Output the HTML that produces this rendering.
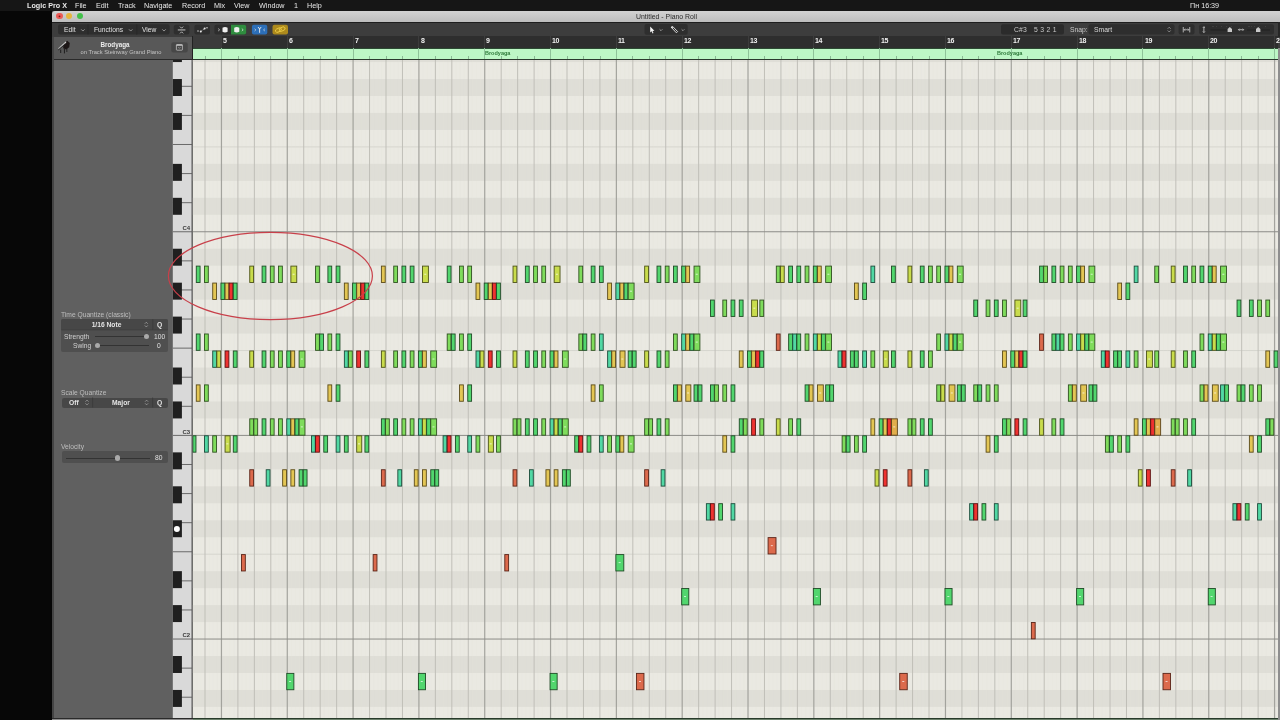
<!DOCTYPE html>
<html><head><meta charset="utf-8"><style>
html,body{margin:0;padding:0;width:1280px;height:720px;overflow:hidden;background:#070707;font-family:'Liberation Sans', sans-serif;-webkit-font-smoothing:antialiased;}
.mt,.it,svg text{will-change:transform}
.a{position:absolute}
.mt{position:absolute;top:0;height:11px;line-height:11px;font-size:7.2px;color:#e8e8e8;white-space:nowrap}
.it{position:absolute;font-size:6.7px;color:#bdbdbd;white-space:nowrap;line-height:8px}
svg{position:absolute;left:0;top:0}
</style></head><body>
<div class="a" style="left:0;top:0;width:1280px;height:10.6px;background:#161616"></div>
<div class="a" style="left:52px;top:11px;width:1228px;height:709px;background:#3c3c3c"></div>
<div class="a" style="left:52px;top:11px;width:1228px;height:11px;background:linear-gradient(#d2d2d2,#bdbdbd);border-radius:3px 0 0 0"></div>
<div class="a" style="left:52px;top:21.6px;width:1227px;height:1px;background:#1e1e1e"></div>
<div class="a" style="left:52px;top:22.5px;width:1226.4px;height:14px;background:#3d3d3d"></div><div class="a" style="left:1278.4px;top:22px;width:1.6px;height:14.5px;background:#262626"></div>
<div class="a" style="left:52px;top:36.5px;width:120.5px;height:683.5px;background:#606060"></div>
<div class="a" style="left:52px;top:36.5px;width:140.5px;height:22.5px;background:#585858"></div>
<div class="a" style="left:52px;top:59px;width:140.5px;height:1px;background:#2a2a2a"></div>
<div class="a" style="left:52px;top:36.5px;width:1.5px;height:683.5px;background:#444"></div>
<div class="a" style="left:192.5px;top:36px;width:1085.5px;height:12.3px;background:#2e2e2e"></div>
<div class="a" style="left:192.5px;top:36px;width:28.9px;height:12.3px;background:#3b3b3b"></div>
<div style="position:absolute;left:220.95px;top:36px;width:1px;height:12.3px;background:#3c3c3c"></div><div style="position:absolute;left:223.05px;top:36.2px;font:bold 7px 'Liberation Sans', sans-serif;letter-spacing:-0.5px;color:#f0f0f0;line-height:9px;will-change:transform">5</div><div style="position:absolute;left:286.77px;top:36px;width:1px;height:12.3px;background:#3c3c3c"></div><div style="position:absolute;left:288.87px;top:36.2px;font:bold 7px 'Liberation Sans', sans-serif;letter-spacing:-0.5px;color:#f0f0f0;line-height:9px;will-change:transform">6</div><div style="position:absolute;left:352.59px;top:36px;width:1px;height:12.3px;background:#3c3c3c"></div><div style="position:absolute;left:354.69px;top:36.2px;font:bold 7px 'Liberation Sans', sans-serif;letter-spacing:-0.5px;color:#f0f0f0;line-height:9px;will-change:transform">7</div><div style="position:absolute;left:418.41px;top:36px;width:1px;height:12.3px;background:#3c3c3c"></div><div style="position:absolute;left:420.51px;top:36.2px;font:bold 7px 'Liberation Sans', sans-serif;letter-spacing:-0.5px;color:#f0f0f0;line-height:9px;will-change:transform">8</div><div style="position:absolute;left:484.23px;top:36px;width:1px;height:12.3px;background:#3c3c3c"></div><div style="position:absolute;left:486.33px;top:36.2px;font:bold 7px 'Liberation Sans', sans-serif;letter-spacing:-0.5px;color:#f0f0f0;line-height:9px;will-change:transform">9</div><div style="position:absolute;left:550.05px;top:36px;width:1px;height:12.3px;background:#3c3c3c"></div><div style="position:absolute;left:552.15px;top:36.2px;font:bold 7px 'Liberation Sans', sans-serif;letter-spacing:-0.5px;color:#f0f0f0;line-height:9px;will-change:transform">10</div><div style="position:absolute;left:615.87px;top:36px;width:1px;height:12.3px;background:#3c3c3c"></div><div style="position:absolute;left:617.97px;top:36.2px;font:bold 7px 'Liberation Sans', sans-serif;letter-spacing:-0.5px;color:#f0f0f0;line-height:9px;will-change:transform">11</div><div style="position:absolute;left:681.69px;top:36px;width:1px;height:12.3px;background:#3c3c3c"></div><div style="position:absolute;left:683.79px;top:36.2px;font:bold 7px 'Liberation Sans', sans-serif;letter-spacing:-0.5px;color:#f0f0f0;line-height:9px;will-change:transform">12</div><div style="position:absolute;left:747.51px;top:36px;width:1px;height:12.3px;background:#3c3c3c"></div><div style="position:absolute;left:749.61px;top:36.2px;font:bold 7px 'Liberation Sans', sans-serif;letter-spacing:-0.5px;color:#f0f0f0;line-height:9px;will-change:transform">13</div><div style="position:absolute;left:813.33px;top:36px;width:1px;height:12.3px;background:#3c3c3c"></div><div style="position:absolute;left:815.43px;top:36.2px;font:bold 7px 'Liberation Sans', sans-serif;letter-spacing:-0.5px;color:#f0f0f0;line-height:9px;will-change:transform">14</div><div style="position:absolute;left:879.15px;top:36px;width:1px;height:12.3px;background:#3c3c3c"></div><div style="position:absolute;left:881.25px;top:36.2px;font:bold 7px 'Liberation Sans', sans-serif;letter-spacing:-0.5px;color:#f0f0f0;line-height:9px;will-change:transform">15</div><div style="position:absolute;left:944.97px;top:36px;width:1px;height:12.3px;background:#3c3c3c"></div><div style="position:absolute;left:947.07px;top:36.2px;font:bold 7px 'Liberation Sans', sans-serif;letter-spacing:-0.5px;color:#f0f0f0;line-height:9px;will-change:transform">16</div><div style="position:absolute;left:1010.79px;top:36px;width:1px;height:12.3px;background:#3c3c3c"></div><div style="position:absolute;left:1012.89px;top:36.2px;font:bold 7px 'Liberation Sans', sans-serif;letter-spacing:-0.5px;color:#f0f0f0;line-height:9px;will-change:transform">17</div><div style="position:absolute;left:1076.61px;top:36px;width:1px;height:12.3px;background:#3c3c3c"></div><div style="position:absolute;left:1078.71px;top:36.2px;font:bold 7px 'Liberation Sans', sans-serif;letter-spacing:-0.5px;color:#f0f0f0;line-height:9px;will-change:transform">18</div><div style="position:absolute;left:1142.43px;top:36px;width:1px;height:12.3px;background:#3c3c3c"></div><div style="position:absolute;left:1144.53px;top:36.2px;font:bold 7px 'Liberation Sans', sans-serif;letter-spacing:-0.5px;color:#f0f0f0;line-height:9px;will-change:transform">19</div><div style="position:absolute;left:1208.25px;top:36px;width:1px;height:12.3px;background:#3c3c3c"></div><div style="position:absolute;left:1210.35px;top:36.2px;font:bold 7px 'Liberation Sans', sans-serif;letter-spacing:-0.5px;color:#f0f0f0;line-height:9px;will-change:transform">20</div><div style="position:absolute;left:1274.07px;top:36px;width:1px;height:12.3px;background:#3c3c3c"></div><div style="position:absolute;left:1276.17px;top:36.2px;font:bold 7px 'Liberation Sans', sans-serif;letter-spacing:-0.5px;color:#f0f0f0;line-height:9px;will-change:transform">21</div>
<div class="a" style="left:192.5px;top:48.3px;width:1085.5px;height:10.8px;background:#bdf7c6"></div>
<div class="a" style="left:192.5px;top:48.1px;width:1085.5px;height:0.6px;background:#2c4a32"></div>
<div style="position:absolute;left:204.59px;top:56px;width:0.8px;height:3px;background:#8ab894"></div><div style="position:absolute;left:220.95px;top:48px;width:1px;height:11px;background:#8fc39a"></div><div style="position:absolute;left:237.50px;top:56px;width:0.8px;height:3px;background:#8ab894"></div><div style="position:absolute;left:253.96px;top:56px;width:0.8px;height:3px;background:#8ab894"></div><div style="position:absolute;left:270.42px;top:56px;width:0.8px;height:3px;background:#8ab894"></div><div style="position:absolute;left:286.77px;top:48px;width:1px;height:11px;background:#8fc39a"></div><div style="position:absolute;left:303.32px;top:56px;width:0.8px;height:3px;background:#8ab894"></div><div style="position:absolute;left:319.78px;top:56px;width:0.8px;height:3px;background:#8ab894"></div><div style="position:absolute;left:336.24px;top:56px;width:0.8px;height:3px;background:#8ab894"></div><div style="position:absolute;left:352.59px;top:48px;width:1px;height:11px;background:#8fc39a"></div><div style="position:absolute;left:369.14px;top:56px;width:0.8px;height:3px;background:#8ab894"></div><div style="position:absolute;left:385.60px;top:56px;width:0.8px;height:3px;background:#8ab894"></div><div style="position:absolute;left:402.06px;top:56px;width:0.8px;height:3px;background:#8ab894"></div><div style="position:absolute;left:418.41px;top:48px;width:1px;height:11px;background:#8fc39a"></div><div style="position:absolute;left:434.96px;top:56px;width:0.8px;height:3px;background:#8ab894"></div><div style="position:absolute;left:451.42px;top:56px;width:0.8px;height:3px;background:#8ab894"></div><div style="position:absolute;left:467.88px;top:56px;width:0.8px;height:3px;background:#8ab894"></div><div style="position:absolute;left:484.23px;top:48px;width:1px;height:11px;background:#8fc39a"></div><div style="position:absolute;left:500.78px;top:56px;width:0.8px;height:3px;background:#8ab894"></div><div style="position:absolute;left:517.24px;top:56px;width:0.8px;height:3px;background:#8ab894"></div><div style="position:absolute;left:533.70px;top:56px;width:0.8px;height:3px;background:#8ab894"></div><div style="position:absolute;left:550.05px;top:48px;width:1px;height:11px;background:#8fc39a"></div><div style="position:absolute;left:566.60px;top:56px;width:0.8px;height:3px;background:#8ab894"></div><div style="position:absolute;left:583.06px;top:56px;width:0.8px;height:3px;background:#8ab894"></div><div style="position:absolute;left:599.51px;top:56px;width:0.8px;height:3px;background:#8ab894"></div><div style="position:absolute;left:615.87px;top:48px;width:1px;height:11px;background:#8fc39a"></div><div style="position:absolute;left:632.42px;top:56px;width:0.8px;height:3px;background:#8ab894"></div><div style="position:absolute;left:648.88px;top:56px;width:0.8px;height:3px;background:#8ab894"></div><div style="position:absolute;left:665.33px;top:56px;width:0.8px;height:3px;background:#8ab894"></div><div style="position:absolute;left:681.69px;top:48px;width:1px;height:11px;background:#8fc39a"></div><div style="position:absolute;left:698.25px;top:56px;width:0.8px;height:3px;background:#8ab894"></div><div style="position:absolute;left:714.70px;top:56px;width:0.8px;height:3px;background:#8ab894"></div><div style="position:absolute;left:731.15px;top:56px;width:0.8px;height:3px;background:#8ab894"></div><div style="position:absolute;left:747.51px;top:48px;width:1px;height:11px;background:#8fc39a"></div><div style="position:absolute;left:764.06px;top:56px;width:0.8px;height:3px;background:#8ab894"></div><div style="position:absolute;left:780.52px;top:56px;width:0.8px;height:3px;background:#8ab894"></div><div style="position:absolute;left:796.98px;top:56px;width:0.8px;height:3px;background:#8ab894"></div><div style="position:absolute;left:813.33px;top:48px;width:1px;height:11px;background:#8fc39a"></div><div style="position:absolute;left:829.88px;top:56px;width:0.8px;height:3px;background:#8ab894"></div><div style="position:absolute;left:846.34px;top:56px;width:0.8px;height:3px;background:#8ab894"></div><div style="position:absolute;left:862.79px;top:56px;width:0.8px;height:3px;background:#8ab894"></div><div style="position:absolute;left:879.15px;top:48px;width:1px;height:11px;background:#8fc39a"></div><div style="position:absolute;left:895.71px;top:56px;width:0.8px;height:3px;background:#8ab894"></div><div style="position:absolute;left:912.16px;top:56px;width:0.8px;height:3px;background:#8ab894"></div><div style="position:absolute;left:928.61px;top:56px;width:0.8px;height:3px;background:#8ab894"></div><div style="position:absolute;left:944.97px;top:48px;width:1px;height:11px;background:#8fc39a"></div><div style="position:absolute;left:961.52px;top:56px;width:0.8px;height:3px;background:#8ab894"></div><div style="position:absolute;left:977.98px;top:56px;width:0.8px;height:3px;background:#8ab894"></div><div style="position:absolute;left:994.43px;top:56px;width:0.8px;height:3px;background:#8ab894"></div><div style="position:absolute;left:1010.79px;top:48px;width:1px;height:11px;background:#8fc39a"></div><div style="position:absolute;left:1027.34px;top:56px;width:0.8px;height:3px;background:#8ab894"></div><div style="position:absolute;left:1043.80px;top:56px;width:0.8px;height:3px;background:#8ab894"></div><div style="position:absolute;left:1060.25px;top:56px;width:0.8px;height:3px;background:#8ab894"></div><div style="position:absolute;left:1076.61px;top:48px;width:1px;height:11px;background:#8fc39a"></div><div style="position:absolute;left:1093.16px;top:56px;width:0.8px;height:3px;background:#8ab894"></div><div style="position:absolute;left:1109.62px;top:56px;width:0.8px;height:3px;background:#8ab894"></div><div style="position:absolute;left:1126.07px;top:56px;width:0.8px;height:3px;background:#8ab894"></div><div style="position:absolute;left:1142.43px;top:48px;width:1px;height:11px;background:#8fc39a"></div><div style="position:absolute;left:1158.98px;top:56px;width:0.8px;height:3px;background:#8ab894"></div><div style="position:absolute;left:1175.44px;top:56px;width:0.8px;height:3px;background:#8ab894"></div><div style="position:absolute;left:1191.89px;top:56px;width:0.8px;height:3px;background:#8ab894"></div><div style="position:absolute;left:1208.25px;top:48px;width:1px;height:11px;background:#8fc39a"></div><div style="position:absolute;left:1224.80px;top:56px;width:0.8px;height:3px;background:#8ab894"></div><div style="position:absolute;left:1241.26px;top:56px;width:0.8px;height:3px;background:#8ab894"></div><div style="position:absolute;left:1257.71px;top:56px;width:0.8px;height:3px;background:#8ab894"></div><div style="position:absolute;left:1274.07px;top:48px;width:1px;height:11px;background:#8fc39a"></div>
<div class="a" style="left:192.5px;top:59.1px;width:1085.5px;height:0.9px;background:#2b3a2e"></div>
<div class="a" style="left:192px;top:36px;width:0.8px;height:23px;background:#222"></div>
<div class="a" style="left:56.4px;top:13.2px;width:6.2px;height:6.2px;border-radius:50%;background:#ec5a55"></div>
<div class="a" style="left:66.3px;top:13.2px;width:6.2px;height:6.2px;border-radius:50%;background:#e6b63c"></div>
<div class="a" style="left:76.6px;top:13.2px;width:6.2px;height:6.2px;border-radius:50%;background:#42c04a"></div>
<svg width="1280" height="720"><rect x="192.5" y="60.0" width="1085.5" height="658.0" fill="#eae9e2"/><rect x="192.5" y="689.95" width="1085.5" height="16.97" fill="#dfded7"/><rect x="192.5" y="656.01" width="1085.5" height="16.97" fill="#dfded7"/><rect x="192.5" y="605.10" width="1085.5" height="16.97" fill="#dfded7"/><rect x="192.5" y="571.16" width="1085.5" height="16.97" fill="#dfded7"/><rect x="192.5" y="520.25" width="1085.5" height="16.97" fill="#dfded7"/><rect x="192.5" y="486.31" width="1085.5" height="16.97" fill="#dfded7"/><rect x="192.5" y="452.37" width="1085.5" height="16.97" fill="#dfded7"/><rect x="192.5" y="401.46" width="1085.5" height="16.97" fill="#dfded7"/><rect x="192.5" y="367.52" width="1085.5" height="16.97" fill="#dfded7"/><rect x="192.5" y="316.61" width="1085.5" height="16.97" fill="#dfded7"/><rect x="192.5" y="282.67" width="1085.5" height="16.97" fill="#dfded7"/><rect x="192.5" y="248.73" width="1085.5" height="16.97" fill="#dfded7"/><rect x="192.5" y="197.82" width="1085.5" height="16.97" fill="#dfded7"/><rect x="192.5" y="163.88" width="1085.5" height="16.97" fill="#dfded7"/><rect x="192.5" y="112.97" width="1085.5" height="16.97" fill="#dfded7"/><rect x="192.5" y="79.03" width="1085.5" height="16.97" fill="#dfded7"/><rect x="192.5" y="60.00" width="1085.5" height="2.06" fill="#dfded7"/><rect x="192.5" y="553.69" width="1085.5" height="1" fill="#d6d5ce"/><rect x="192.5" y="350.05" width="1085.5" height="1" fill="#d6d5ce"/><rect x="192.5" y="146.41" width="1085.5" height="1" fill="#d6d5ce"/><rect x="192.15" y="60.0" width="1" height="658.0" fill="#e2e1da" opacity="0.15"/><rect x="196.27" y="60.0" width="1" height="658.0" fill="#e2e1da" opacity="0.15"/><rect x="200.38" y="60.0" width="1" height="658.0" fill="#e2e1da" opacity="0.15"/><rect x="208.61" y="60.0" width="1" height="658.0" fill="#e2e1da" opacity="0.15"/><rect x="212.72" y="60.0" width="1" height="658.0" fill="#e2e1da" opacity="0.15"/><rect x="216.84" y="60.0" width="1" height="658.0" fill="#e2e1da" opacity="0.15"/><rect x="225.06" y="60.0" width="1" height="658.0" fill="#e2e1da" opacity="0.15"/><rect x="229.18" y="60.0" width="1" height="658.0" fill="#e2e1da" opacity="0.15"/><rect x="233.29" y="60.0" width="1" height="658.0" fill="#e2e1da" opacity="0.15"/><rect x="241.52" y="60.0" width="1" height="658.0" fill="#e2e1da" opacity="0.15"/><rect x="245.63" y="60.0" width="1" height="658.0" fill="#e2e1da" opacity="0.15"/><rect x="249.75" y="60.0" width="1" height="658.0" fill="#e2e1da" opacity="0.15"/><rect x="257.97" y="60.0" width="1" height="658.0" fill="#e2e1da" opacity="0.15"/><rect x="262.09" y="60.0" width="1" height="658.0" fill="#e2e1da" opacity="0.15"/><rect x="266.20" y="60.0" width="1" height="658.0" fill="#e2e1da" opacity="0.15"/><rect x="274.43" y="60.0" width="1" height="658.0" fill="#e2e1da" opacity="0.15"/><rect x="278.54" y="60.0" width="1" height="658.0" fill="#e2e1da" opacity="0.15"/><rect x="282.66" y="60.0" width="1" height="658.0" fill="#e2e1da" opacity="0.15"/><rect x="290.88" y="60.0" width="1" height="658.0" fill="#e2e1da" opacity="0.15"/><rect x="295.00" y="60.0" width="1" height="658.0" fill="#e2e1da" opacity="0.15"/><rect x="299.11" y="60.0" width="1" height="658.0" fill="#e2e1da" opacity="0.15"/><rect x="307.34" y="60.0" width="1" height="658.0" fill="#e2e1da" opacity="0.15"/><rect x="311.45" y="60.0" width="1" height="658.0" fill="#e2e1da" opacity="0.15"/><rect x="315.57" y="60.0" width="1" height="658.0" fill="#e2e1da" opacity="0.15"/><rect x="323.79" y="60.0" width="1" height="658.0" fill="#e2e1da" opacity="0.15"/><rect x="327.91" y="60.0" width="1" height="658.0" fill="#e2e1da" opacity="0.15"/><rect x="332.02" y="60.0" width="1" height="658.0" fill="#e2e1da" opacity="0.15"/><rect x="340.25" y="60.0" width="1" height="658.0" fill="#e2e1da" opacity="0.15"/><rect x="344.36" y="60.0" width="1" height="658.0" fill="#e2e1da" opacity="0.15"/><rect x="348.48" y="60.0" width="1" height="658.0" fill="#e2e1da" opacity="0.15"/><rect x="356.70" y="60.0" width="1" height="658.0" fill="#e2e1da" opacity="0.15"/><rect x="360.82" y="60.0" width="1" height="658.0" fill="#e2e1da" opacity="0.15"/><rect x="364.93" y="60.0" width="1" height="658.0" fill="#e2e1da" opacity="0.15"/><rect x="373.16" y="60.0" width="1" height="658.0" fill="#e2e1da" opacity="0.15"/><rect x="377.27" y="60.0" width="1" height="658.0" fill="#e2e1da" opacity="0.15"/><rect x="381.39" y="60.0" width="1" height="658.0" fill="#e2e1da" opacity="0.15"/><rect x="389.61" y="60.0" width="1" height="658.0" fill="#e2e1da" opacity="0.15"/><rect x="393.73" y="60.0" width="1" height="658.0" fill="#e2e1da" opacity="0.15"/><rect x="397.84" y="60.0" width="1" height="658.0" fill="#e2e1da" opacity="0.15"/><rect x="406.07" y="60.0" width="1" height="658.0" fill="#e2e1da" opacity="0.15"/><rect x="410.18" y="60.0" width="1" height="658.0" fill="#e2e1da" opacity="0.15"/><rect x="414.30" y="60.0" width="1" height="658.0" fill="#e2e1da" opacity="0.15"/><rect x="422.52" y="60.0" width="1" height="658.0" fill="#e2e1da" opacity="0.15"/><rect x="426.64" y="60.0" width="1" height="658.0" fill="#e2e1da" opacity="0.15"/><rect x="430.75" y="60.0" width="1" height="658.0" fill="#e2e1da" opacity="0.15"/><rect x="438.98" y="60.0" width="1" height="658.0" fill="#e2e1da" opacity="0.15"/><rect x="443.09" y="60.0" width="1" height="658.0" fill="#e2e1da" opacity="0.15"/><rect x="447.21" y="60.0" width="1" height="658.0" fill="#e2e1da" opacity="0.15"/><rect x="455.43" y="60.0" width="1" height="658.0" fill="#e2e1da" opacity="0.15"/><rect x="459.55" y="60.0" width="1" height="658.0" fill="#e2e1da" opacity="0.15"/><rect x="463.66" y="60.0" width="1" height="658.0" fill="#e2e1da" opacity="0.15"/><rect x="471.89" y="60.0" width="1" height="658.0" fill="#e2e1da" opacity="0.15"/><rect x="476.00" y="60.0" width="1" height="658.0" fill="#e2e1da" opacity="0.15"/><rect x="480.12" y="60.0" width="1" height="658.0" fill="#e2e1da" opacity="0.15"/><rect x="488.34" y="60.0" width="1" height="658.0" fill="#e2e1da" opacity="0.15"/><rect x="492.46" y="60.0" width="1" height="658.0" fill="#e2e1da" opacity="0.15"/><rect x="496.57" y="60.0" width="1" height="658.0" fill="#e2e1da" opacity="0.15"/><rect x="504.80" y="60.0" width="1" height="658.0" fill="#e2e1da" opacity="0.15"/><rect x="508.91" y="60.0" width="1" height="658.0" fill="#e2e1da" opacity="0.15"/><rect x="513.03" y="60.0" width="1" height="658.0" fill="#e2e1da" opacity="0.15"/><rect x="521.25" y="60.0" width="1" height="658.0" fill="#e2e1da" opacity="0.15"/><rect x="525.37" y="60.0" width="1" height="658.0" fill="#e2e1da" opacity="0.15"/><rect x="529.48" y="60.0" width="1" height="658.0" fill="#e2e1da" opacity="0.15"/><rect x="537.71" y="60.0" width="1" height="658.0" fill="#e2e1da" opacity="0.15"/><rect x="541.82" y="60.0" width="1" height="658.0" fill="#e2e1da" opacity="0.15"/><rect x="545.94" y="60.0" width="1" height="658.0" fill="#e2e1da" opacity="0.15"/><rect x="554.16" y="60.0" width="1" height="658.0" fill="#e2e1da" opacity="0.15"/><rect x="558.28" y="60.0" width="1" height="658.0" fill="#e2e1da" opacity="0.15"/><rect x="562.39" y="60.0" width="1" height="658.0" fill="#e2e1da" opacity="0.15"/><rect x="570.62" y="60.0" width="1" height="658.0" fill="#e2e1da" opacity="0.15"/><rect x="574.73" y="60.0" width="1" height="658.0" fill="#e2e1da" opacity="0.15"/><rect x="578.85" y="60.0" width="1" height="658.0" fill="#e2e1da" opacity="0.15"/><rect x="587.07" y="60.0" width="1" height="658.0" fill="#e2e1da" opacity="0.15"/><rect x="591.19" y="60.0" width="1" height="658.0" fill="#e2e1da" opacity="0.15"/><rect x="595.30" y="60.0" width="1" height="658.0" fill="#e2e1da" opacity="0.15"/><rect x="603.53" y="60.0" width="1" height="658.0" fill="#e2e1da" opacity="0.15"/><rect x="607.64" y="60.0" width="1" height="658.0" fill="#e2e1da" opacity="0.15"/><rect x="611.76" y="60.0" width="1" height="658.0" fill="#e2e1da" opacity="0.15"/><rect x="619.98" y="60.0" width="1" height="658.0" fill="#e2e1da" opacity="0.15"/><rect x="624.10" y="60.0" width="1" height="658.0" fill="#e2e1da" opacity="0.15"/><rect x="628.21" y="60.0" width="1" height="658.0" fill="#e2e1da" opacity="0.15"/><rect x="636.44" y="60.0" width="1" height="658.0" fill="#e2e1da" opacity="0.15"/><rect x="640.55" y="60.0" width="1" height="658.0" fill="#e2e1da" opacity="0.15"/><rect x="644.67" y="60.0" width="1" height="658.0" fill="#e2e1da" opacity="0.15"/><rect x="652.89" y="60.0" width="1" height="658.0" fill="#e2e1da" opacity="0.15"/><rect x="657.01" y="60.0" width="1" height="658.0" fill="#e2e1da" opacity="0.15"/><rect x="661.12" y="60.0" width="1" height="658.0" fill="#e2e1da" opacity="0.15"/><rect x="669.35" y="60.0" width="1" height="658.0" fill="#e2e1da" opacity="0.15"/><rect x="673.46" y="60.0" width="1" height="658.0" fill="#e2e1da" opacity="0.15"/><rect x="677.58" y="60.0" width="1" height="658.0" fill="#e2e1da" opacity="0.15"/><rect x="685.80" y="60.0" width="1" height="658.0" fill="#e2e1da" opacity="0.15"/><rect x="689.92" y="60.0" width="1" height="658.0" fill="#e2e1da" opacity="0.15"/><rect x="694.03" y="60.0" width="1" height="658.0" fill="#e2e1da" opacity="0.15"/><rect x="702.26" y="60.0" width="1" height="658.0" fill="#e2e1da" opacity="0.15"/><rect x="706.37" y="60.0" width="1" height="658.0" fill="#e2e1da" opacity="0.15"/><rect x="710.49" y="60.0" width="1" height="658.0" fill="#e2e1da" opacity="0.15"/><rect x="718.71" y="60.0" width="1" height="658.0" fill="#e2e1da" opacity="0.15"/><rect x="722.83" y="60.0" width="1" height="658.0" fill="#e2e1da" opacity="0.15"/><rect x="726.94" y="60.0" width="1" height="658.0" fill="#e2e1da" opacity="0.15"/><rect x="735.17" y="60.0" width="1" height="658.0" fill="#e2e1da" opacity="0.15"/><rect x="739.28" y="60.0" width="1" height="658.0" fill="#e2e1da" opacity="0.15"/><rect x="743.40" y="60.0" width="1" height="658.0" fill="#e2e1da" opacity="0.15"/><rect x="751.62" y="60.0" width="1" height="658.0" fill="#e2e1da" opacity="0.15"/><rect x="755.74" y="60.0" width="1" height="658.0" fill="#e2e1da" opacity="0.15"/><rect x="759.85" y="60.0" width="1" height="658.0" fill="#e2e1da" opacity="0.15"/><rect x="768.08" y="60.0" width="1" height="658.0" fill="#e2e1da" opacity="0.15"/><rect x="772.19" y="60.0" width="1" height="658.0" fill="#e2e1da" opacity="0.15"/><rect x="776.31" y="60.0" width="1" height="658.0" fill="#e2e1da" opacity="0.15"/><rect x="784.53" y="60.0" width="1" height="658.0" fill="#e2e1da" opacity="0.15"/><rect x="788.65" y="60.0" width="1" height="658.0" fill="#e2e1da" opacity="0.15"/><rect x="792.76" y="60.0" width="1" height="658.0" fill="#e2e1da" opacity="0.15"/><rect x="800.99" y="60.0" width="1" height="658.0" fill="#e2e1da" opacity="0.15"/><rect x="805.10" y="60.0" width="1" height="658.0" fill="#e2e1da" opacity="0.15"/><rect x="809.22" y="60.0" width="1" height="658.0" fill="#e2e1da" opacity="0.15"/><rect x="817.44" y="60.0" width="1" height="658.0" fill="#e2e1da" opacity="0.15"/><rect x="821.56" y="60.0" width="1" height="658.0" fill="#e2e1da" opacity="0.15"/><rect x="825.67" y="60.0" width="1" height="658.0" fill="#e2e1da" opacity="0.15"/><rect x="833.90" y="60.0" width="1" height="658.0" fill="#e2e1da" opacity="0.15"/><rect x="838.01" y="60.0" width="1" height="658.0" fill="#e2e1da" opacity="0.15"/><rect x="842.13" y="60.0" width="1" height="658.0" fill="#e2e1da" opacity="0.15"/><rect x="850.35" y="60.0" width="1" height="658.0" fill="#e2e1da" opacity="0.15"/><rect x="854.47" y="60.0" width="1" height="658.0" fill="#e2e1da" opacity="0.15"/><rect x="858.58" y="60.0" width="1" height="658.0" fill="#e2e1da" opacity="0.15"/><rect x="866.81" y="60.0" width="1" height="658.0" fill="#e2e1da" opacity="0.15"/><rect x="870.92" y="60.0" width="1" height="658.0" fill="#e2e1da" opacity="0.15"/><rect x="875.04" y="60.0" width="1" height="658.0" fill="#e2e1da" opacity="0.15"/><rect x="883.26" y="60.0" width="1" height="658.0" fill="#e2e1da" opacity="0.15"/><rect x="887.38" y="60.0" width="1" height="658.0" fill="#e2e1da" opacity="0.15"/><rect x="891.49" y="60.0" width="1" height="658.0" fill="#e2e1da" opacity="0.15"/><rect x="899.72" y="60.0" width="1" height="658.0" fill="#e2e1da" opacity="0.15"/><rect x="903.83" y="60.0" width="1" height="658.0" fill="#e2e1da" opacity="0.15"/><rect x="907.95" y="60.0" width="1" height="658.0" fill="#e2e1da" opacity="0.15"/><rect x="916.17" y="60.0" width="1" height="658.0" fill="#e2e1da" opacity="0.15"/><rect x="920.29" y="60.0" width="1" height="658.0" fill="#e2e1da" opacity="0.15"/><rect x="924.40" y="60.0" width="1" height="658.0" fill="#e2e1da" opacity="0.15"/><rect x="932.63" y="60.0" width="1" height="658.0" fill="#e2e1da" opacity="0.15"/><rect x="936.74" y="60.0" width="1" height="658.0" fill="#e2e1da" opacity="0.15"/><rect x="940.86" y="60.0" width="1" height="658.0" fill="#e2e1da" opacity="0.15"/><rect x="949.08" y="60.0" width="1" height="658.0" fill="#e2e1da" opacity="0.15"/><rect x="953.20" y="60.0" width="1" height="658.0" fill="#e2e1da" opacity="0.15"/><rect x="957.31" y="60.0" width="1" height="658.0" fill="#e2e1da" opacity="0.15"/><rect x="965.54" y="60.0" width="1" height="658.0" fill="#e2e1da" opacity="0.15"/><rect x="969.65" y="60.0" width="1" height="658.0" fill="#e2e1da" opacity="0.15"/><rect x="973.77" y="60.0" width="1" height="658.0" fill="#e2e1da" opacity="0.15"/><rect x="981.99" y="60.0" width="1" height="658.0" fill="#e2e1da" opacity="0.15"/><rect x="986.11" y="60.0" width="1" height="658.0" fill="#e2e1da" opacity="0.15"/><rect x="990.22" y="60.0" width="1" height="658.0" fill="#e2e1da" opacity="0.15"/><rect x="998.45" y="60.0" width="1" height="658.0" fill="#e2e1da" opacity="0.15"/><rect x="1002.56" y="60.0" width="1" height="658.0" fill="#e2e1da" opacity="0.15"/><rect x="1006.68" y="60.0" width="1" height="658.0" fill="#e2e1da" opacity="0.15"/><rect x="1014.90" y="60.0" width="1" height="658.0" fill="#e2e1da" opacity="0.15"/><rect x="1019.02" y="60.0" width="1" height="658.0" fill="#e2e1da" opacity="0.15"/><rect x="1023.13" y="60.0" width="1" height="658.0" fill="#e2e1da" opacity="0.15"/><rect x="1031.36" y="60.0" width="1" height="658.0" fill="#e2e1da" opacity="0.15"/><rect x="1035.47" y="60.0" width="1" height="658.0" fill="#e2e1da" opacity="0.15"/><rect x="1039.59" y="60.0" width="1" height="658.0" fill="#e2e1da" opacity="0.15"/><rect x="1047.81" y="60.0" width="1" height="658.0" fill="#e2e1da" opacity="0.15"/><rect x="1051.93" y="60.0" width="1" height="658.0" fill="#e2e1da" opacity="0.15"/><rect x="1056.04" y="60.0" width="1" height="658.0" fill="#e2e1da" opacity="0.15"/><rect x="1064.27" y="60.0" width="1" height="658.0" fill="#e2e1da" opacity="0.15"/><rect x="1068.38" y="60.0" width="1" height="658.0" fill="#e2e1da" opacity="0.15"/><rect x="1072.50" y="60.0" width="1" height="658.0" fill="#e2e1da" opacity="0.15"/><rect x="1080.72" y="60.0" width="1" height="658.0" fill="#e2e1da" opacity="0.15"/><rect x="1084.84" y="60.0" width="1" height="658.0" fill="#e2e1da" opacity="0.15"/><rect x="1088.95" y="60.0" width="1" height="658.0" fill="#e2e1da" opacity="0.15"/><rect x="1097.18" y="60.0" width="1" height="658.0" fill="#e2e1da" opacity="0.15"/><rect x="1101.29" y="60.0" width="1" height="658.0" fill="#e2e1da" opacity="0.15"/><rect x="1105.41" y="60.0" width="1" height="658.0" fill="#e2e1da" opacity="0.15"/><rect x="1113.63" y="60.0" width="1" height="658.0" fill="#e2e1da" opacity="0.15"/><rect x="1117.75" y="60.0" width="1" height="658.0" fill="#e2e1da" opacity="0.15"/><rect x="1121.86" y="60.0" width="1" height="658.0" fill="#e2e1da" opacity="0.15"/><rect x="1130.09" y="60.0" width="1" height="658.0" fill="#e2e1da" opacity="0.15"/><rect x="1134.20" y="60.0" width="1" height="658.0" fill="#e2e1da" opacity="0.15"/><rect x="1138.32" y="60.0" width="1" height="658.0" fill="#e2e1da" opacity="0.15"/><rect x="1146.54" y="60.0" width="1" height="658.0" fill="#e2e1da" opacity="0.15"/><rect x="1150.66" y="60.0" width="1" height="658.0" fill="#e2e1da" opacity="0.15"/><rect x="1154.77" y="60.0" width="1" height="658.0" fill="#e2e1da" opacity="0.15"/><rect x="1163.00" y="60.0" width="1" height="658.0" fill="#e2e1da" opacity="0.15"/><rect x="1167.11" y="60.0" width="1" height="658.0" fill="#e2e1da" opacity="0.15"/><rect x="1171.23" y="60.0" width="1" height="658.0" fill="#e2e1da" opacity="0.15"/><rect x="1179.45" y="60.0" width="1" height="658.0" fill="#e2e1da" opacity="0.15"/><rect x="1183.57" y="60.0" width="1" height="658.0" fill="#e2e1da" opacity="0.15"/><rect x="1187.68" y="60.0" width="1" height="658.0" fill="#e2e1da" opacity="0.15"/><rect x="1195.91" y="60.0" width="1" height="658.0" fill="#e2e1da" opacity="0.15"/><rect x="1200.02" y="60.0" width="1" height="658.0" fill="#e2e1da" opacity="0.15"/><rect x="1204.14" y="60.0" width="1" height="658.0" fill="#e2e1da" opacity="0.15"/><rect x="1212.36" y="60.0" width="1" height="658.0" fill="#e2e1da" opacity="0.15"/><rect x="1216.48" y="60.0" width="1" height="658.0" fill="#e2e1da" opacity="0.15"/><rect x="1220.59" y="60.0" width="1" height="658.0" fill="#e2e1da" opacity="0.15"/><rect x="1228.82" y="60.0" width="1" height="658.0" fill="#e2e1da" opacity="0.15"/><rect x="1232.93" y="60.0" width="1" height="658.0" fill="#e2e1da" opacity="0.15"/><rect x="1237.05" y="60.0" width="1" height="658.0" fill="#e2e1da" opacity="0.15"/><rect x="1245.27" y="60.0" width="1" height="658.0" fill="#e2e1da" opacity="0.15"/><rect x="1249.39" y="60.0" width="1" height="658.0" fill="#e2e1da" opacity="0.15"/><rect x="1253.50" y="60.0" width="1" height="658.0" fill="#e2e1da" opacity="0.15"/><rect x="1261.73" y="60.0" width="1" height="658.0" fill="#e2e1da" opacity="0.15"/><rect x="1265.84" y="60.0" width="1" height="658.0" fill="#e2e1da" opacity="0.15"/><rect x="1269.96" y="60.0" width="1" height="658.0" fill="#e2e1da" opacity="0.15"/><rect x="204.50" y="60.0" width="1" height="658.0" fill="#c0bfb8"/><rect x="220.85" y="60.0" width="1.2" height="658.0" fill="#a3a39d"/><rect x="237.40" y="60.0" width="1" height="658.0" fill="#c0bfb8"/><rect x="253.86" y="60.0" width="1" height="658.0" fill="#c0bfb8"/><rect x="270.31" y="60.0" width="1" height="658.0" fill="#c0bfb8"/><rect x="286.67" y="60.0" width="1.2" height="658.0" fill="#a3a39d"/><rect x="303.22" y="60.0" width="1" height="658.0" fill="#c0bfb8"/><rect x="319.68" y="60.0" width="1" height="658.0" fill="#c0bfb8"/><rect x="336.13" y="60.0" width="1" height="658.0" fill="#c0bfb8"/><rect x="352.49" y="60.0" width="1.2" height="658.0" fill="#a3a39d"/><rect x="369.04" y="60.0" width="1" height="658.0" fill="#c0bfb8"/><rect x="385.50" y="60.0" width="1" height="658.0" fill="#c0bfb8"/><rect x="401.95" y="60.0" width="1" height="658.0" fill="#c0bfb8"/><rect x="418.31" y="60.0" width="1.2" height="658.0" fill="#a3a39d"/><rect x="434.86" y="60.0" width="1" height="658.0" fill="#c0bfb8"/><rect x="451.32" y="60.0" width="1" height="658.0" fill="#c0bfb8"/><rect x="467.77" y="60.0" width="1" height="658.0" fill="#c0bfb8"/><rect x="484.13" y="60.0" width="1.2" height="658.0" fill="#a3a39d"/><rect x="500.68" y="60.0" width="1" height="658.0" fill="#c0bfb8"/><rect x="517.14" y="60.0" width="1" height="658.0" fill="#c0bfb8"/><rect x="533.60" y="60.0" width="1" height="658.0" fill="#c0bfb8"/><rect x="549.95" y="60.0" width="1.2" height="658.0" fill="#a3a39d"/><rect x="566.50" y="60.0" width="1" height="658.0" fill="#c0bfb8"/><rect x="582.96" y="60.0" width="1" height="658.0" fill="#c0bfb8"/><rect x="599.41" y="60.0" width="1" height="658.0" fill="#c0bfb8"/><rect x="615.77" y="60.0" width="1.2" height="658.0" fill="#a3a39d"/><rect x="632.32" y="60.0" width="1" height="658.0" fill="#c0bfb8"/><rect x="648.78" y="60.0" width="1" height="658.0" fill="#c0bfb8"/><rect x="665.23" y="60.0" width="1" height="658.0" fill="#c0bfb8"/><rect x="681.59" y="60.0" width="1.2" height="658.0" fill="#a3a39d"/><rect x="698.14" y="60.0" width="1" height="658.0" fill="#c0bfb8"/><rect x="714.60" y="60.0" width="1" height="658.0" fill="#c0bfb8"/><rect x="731.05" y="60.0" width="1" height="658.0" fill="#c0bfb8"/><rect x="747.41" y="60.0" width="1.2" height="658.0" fill="#a3a39d"/><rect x="763.96" y="60.0" width="1" height="658.0" fill="#c0bfb8"/><rect x="780.42" y="60.0" width="1" height="658.0" fill="#c0bfb8"/><rect x="796.88" y="60.0" width="1" height="658.0" fill="#c0bfb8"/><rect x="813.23" y="60.0" width="1.2" height="658.0" fill="#a3a39d"/><rect x="829.78" y="60.0" width="1" height="658.0" fill="#c0bfb8"/><rect x="846.24" y="60.0" width="1" height="658.0" fill="#c0bfb8"/><rect x="862.69" y="60.0" width="1" height="658.0" fill="#c0bfb8"/><rect x="879.05" y="60.0" width="1.2" height="658.0" fill="#a3a39d"/><rect x="895.61" y="60.0" width="1" height="658.0" fill="#c0bfb8"/><rect x="912.06" y="60.0" width="1" height="658.0" fill="#c0bfb8"/><rect x="928.51" y="60.0" width="1" height="658.0" fill="#c0bfb8"/><rect x="944.87" y="60.0" width="1.2" height="658.0" fill="#a3a39d"/><rect x="961.42" y="60.0" width="1" height="658.0" fill="#c0bfb8"/><rect x="977.88" y="60.0" width="1" height="658.0" fill="#c0bfb8"/><rect x="994.33" y="60.0" width="1" height="658.0" fill="#c0bfb8"/><rect x="1010.69" y="60.0" width="1.2" height="658.0" fill="#a3a39d"/><rect x="1027.24" y="60.0" width="1" height="658.0" fill="#c0bfb8"/><rect x="1043.70" y="60.0" width="1" height="658.0" fill="#c0bfb8"/><rect x="1060.15" y="60.0" width="1" height="658.0" fill="#c0bfb8"/><rect x="1076.51" y="60.0" width="1.2" height="658.0" fill="#a3a39d"/><rect x="1093.06" y="60.0" width="1" height="658.0" fill="#c0bfb8"/><rect x="1109.52" y="60.0" width="1" height="658.0" fill="#c0bfb8"/><rect x="1125.97" y="60.0" width="1" height="658.0" fill="#c0bfb8"/><rect x="1142.33" y="60.0" width="1.2" height="658.0" fill="#a3a39d"/><rect x="1158.88" y="60.0" width="1" height="658.0" fill="#c0bfb8"/><rect x="1175.34" y="60.0" width="1" height="658.0" fill="#c0bfb8"/><rect x="1191.79" y="60.0" width="1" height="658.0" fill="#c0bfb8"/><rect x="1208.15" y="60.0" width="1.2" height="658.0" fill="#a3a39d"/><rect x="1224.70" y="60.0" width="1" height="658.0" fill="#c0bfb8"/><rect x="1241.16" y="60.0" width="1" height="658.0" fill="#c0bfb8"/><rect x="1257.62" y="60.0" width="1" height="658.0" fill="#c0bfb8"/><rect x="1273.97" y="60.0" width="1.2" height="658.0" fill="#a3a39d"/><rect x="192.5" y="231.26" width="1085.5" height="1" fill="#8c8c88"/><rect x="192.5" y="434.90" width="1085.5" height="1" fill="#8c8c88"/><rect x="192.5" y="638.54" width="1085.5" height="1" fill="#8c8c88"/><rect x="196.27" y="266.10" width="3.81" height="16.37" fill="#52d66e" stroke="#1f4a26" stroke-width="0.9"/><rect x="204.49" y="266.10" width="3.81" height="16.37" fill="#7fdc5c" stroke="#2f5020" stroke-width="0.9"/><rect x="249.75" y="266.10" width="3.81" height="16.37" fill="#c9dc4c" stroke="#4c5218" stroke-width="0.9"/><rect x="262.09" y="266.10" width="3.81" height="16.37" fill="#52d66e" stroke="#1f4a26" stroke-width="0.9"/><rect x="270.31" y="266.10" width="3.81" height="16.37" fill="#7fdc5c" stroke="#2f5020" stroke-width="0.9"/><rect x="278.54" y="266.10" width="3.81" height="16.37" fill="#7fdc5c" stroke="#2f5020" stroke-width="0.9"/><rect x="290.88" y="266.10" width="5.87" height="16.37" fill="#c9dc4c" stroke="#4c5218" stroke-width="0.9"/><rect x="292.62" y="273.79" width="2" height="0.8" fill="#ffffff" opacity="0.85"/><rect x="315.57" y="266.10" width="3.81" height="16.37" fill="#7fdc5c" stroke="#2f5020" stroke-width="0.9"/><rect x="327.91" y="266.10" width="3.81" height="16.37" fill="#52d66e" stroke="#1f4a26" stroke-width="0.9"/><rect x="336.13" y="266.10" width="3.81" height="16.37" fill="#52d66e" stroke="#1f4a26" stroke-width="0.9"/><rect x="381.39" y="266.10" width="3.81" height="16.37" fill="#e3c654" stroke="#5a4a18" stroke-width="0.9"/><rect x="393.73" y="266.10" width="3.81" height="16.37" fill="#7fdc5c" stroke="#2f5020" stroke-width="0.9"/><rect x="401.96" y="266.10" width="3.81" height="16.37" fill="#52d66e" stroke="#1f4a26" stroke-width="0.9"/><rect x="410.18" y="266.10" width="3.81" height="16.37" fill="#52d66e" stroke="#1f4a26" stroke-width="0.9"/><rect x="422.52" y="266.10" width="5.87" height="16.37" fill="#c9dc4c" stroke="#4c5218" stroke-width="0.9"/><rect x="424.26" y="273.79" width="2" height="0.8" fill="#ffffff" opacity="0.85"/><rect x="447.21" y="266.10" width="3.81" height="16.37" fill="#52d66e" stroke="#1f4a26" stroke-width="0.9"/><rect x="459.55" y="266.10" width="3.81" height="16.37" fill="#7fdc5c" stroke="#2f5020" stroke-width="0.9"/><rect x="467.77" y="266.10" width="3.81" height="16.37" fill="#7fdc5c" stroke="#2f5020" stroke-width="0.9"/><rect x="513.03" y="266.10" width="3.81" height="16.37" fill="#c9dc4c" stroke="#4c5218" stroke-width="0.9"/><rect x="525.37" y="266.10" width="3.81" height="16.37" fill="#52d66e" stroke="#1f4a26" stroke-width="0.9"/><rect x="533.60" y="266.10" width="3.81" height="16.37" fill="#7fdc5c" stroke="#2f5020" stroke-width="0.9"/><rect x="541.82" y="266.10" width="3.81" height="16.37" fill="#7fdc5c" stroke="#2f5020" stroke-width="0.9"/><rect x="554.16" y="266.10" width="5.87" height="16.37" fill="#c9dc4c" stroke="#4c5218" stroke-width="0.9"/><rect x="555.90" y="273.79" width="2" height="0.8" fill="#ffffff" opacity="0.85"/><rect x="578.85" y="266.10" width="3.81" height="16.37" fill="#7fdc5c" stroke="#2f5020" stroke-width="0.9"/><rect x="591.19" y="266.10" width="3.81" height="16.37" fill="#52d66e" stroke="#1f4a26" stroke-width="0.9"/><rect x="599.41" y="266.10" width="3.81" height="16.37" fill="#52d66e" stroke="#1f4a26" stroke-width="0.9"/><rect x="644.67" y="266.10" width="3.81" height="16.37" fill="#c9dc4c" stroke="#4c5218" stroke-width="0.9"/><rect x="657.01" y="266.10" width="3.81" height="16.37" fill="#52d66e" stroke="#1f4a26" stroke-width="0.9"/><rect x="665.24" y="266.10" width="3.81" height="16.37" fill="#7fdc5c" stroke="#2f5020" stroke-width="0.9"/><rect x="673.46" y="266.10" width="3.81" height="16.37" fill="#52d66e" stroke="#1f4a26" stroke-width="0.9"/><rect x="681.69" y="266.10" width="3.81" height="16.37" fill="#52d66e" stroke="#1f4a26" stroke-width="0.9"/><rect x="685.80" y="266.10" width="3.81" height="16.37" fill="#e3c654" stroke="#5a4a18" stroke-width="0.9"/><rect x="694.03" y="266.10" width="5.87" height="16.37" fill="#7fdc5c" stroke="#2f5020" stroke-width="0.9"/><rect x="695.77" y="273.79" width="2" height="0.8" fill="#ffffff" opacity="0.85"/><rect x="776.31" y="266.10" width="3.81" height="16.37" fill="#7fdc5c" stroke="#2f5020" stroke-width="0.9"/><rect x="780.42" y="266.10" width="3.81" height="16.37" fill="#c9dc4c" stroke="#4c5218" stroke-width="0.9"/><rect x="788.65" y="266.10" width="3.81" height="16.37" fill="#52d66e" stroke="#1f4a26" stroke-width="0.9"/><rect x="796.88" y="266.10" width="3.81" height="16.37" fill="#52d66e" stroke="#1f4a26" stroke-width="0.9"/><rect x="805.10" y="266.10" width="3.81" height="16.37" fill="#7fdc5c" stroke="#2f5020" stroke-width="0.9"/><rect x="813.33" y="266.10" width="3.81" height="16.37" fill="#52d66e" stroke="#1f4a26" stroke-width="0.9"/><rect x="817.44" y="266.10" width="3.81" height="16.37" fill="#e3c654" stroke="#5a4a18" stroke-width="0.9"/><rect x="825.67" y="266.10" width="5.87" height="16.37" fill="#7fdc5c" stroke="#2f5020" stroke-width="0.9"/><rect x="827.41" y="273.79" width="2" height="0.8" fill="#ffffff" opacity="0.85"/><rect x="870.92" y="266.10" width="3.81" height="16.37" fill="#52d8a4" stroke="#1c4a3a" stroke-width="0.9"/><rect x="891.49" y="266.10" width="3.81" height="16.37" fill="#52d66e" stroke="#1f4a26" stroke-width="0.9"/><rect x="907.95" y="266.10" width="3.81" height="16.37" fill="#c9dc4c" stroke="#4c5218" stroke-width="0.9"/><rect x="920.29" y="266.10" width="3.81" height="16.37" fill="#52d66e" stroke="#1f4a26" stroke-width="0.9"/><rect x="928.51" y="266.10" width="3.81" height="16.37" fill="#7fdc5c" stroke="#2f5020" stroke-width="0.9"/><rect x="936.74" y="266.10" width="3.81" height="16.37" fill="#7fdc5c" stroke="#2f5020" stroke-width="0.9"/><rect x="944.97" y="266.10" width="3.81" height="16.37" fill="#52d66e" stroke="#1f4a26" stroke-width="0.9"/><rect x="949.08" y="266.10" width="3.81" height="16.37" fill="#e3c654" stroke="#5a4a18" stroke-width="0.9"/><rect x="957.31" y="266.10" width="5.87" height="16.37" fill="#7fdc5c" stroke="#2f5020" stroke-width="0.9"/><rect x="959.05" y="273.79" width="2" height="0.8" fill="#ffffff" opacity="0.85"/><rect x="1039.59" y="266.10" width="3.81" height="16.37" fill="#52d66e" stroke="#1f4a26" stroke-width="0.9"/><rect x="1043.70" y="266.10" width="3.81" height="16.37" fill="#7fdc5c" stroke="#2f5020" stroke-width="0.9"/><rect x="1051.93" y="266.10" width="3.81" height="16.37" fill="#52d66e" stroke="#1f4a26" stroke-width="0.9"/><rect x="1060.15" y="266.10" width="3.81" height="16.37" fill="#7fdc5c" stroke="#2f5020" stroke-width="0.9"/><rect x="1068.38" y="266.10" width="3.81" height="16.37" fill="#7fdc5c" stroke="#2f5020" stroke-width="0.9"/><rect x="1076.61" y="266.10" width="3.81" height="16.37" fill="#52d66e" stroke="#1f4a26" stroke-width="0.9"/><rect x="1080.72" y="266.10" width="3.81" height="16.37" fill="#e3c654" stroke="#5a4a18" stroke-width="0.9"/><rect x="1088.95" y="266.10" width="5.87" height="16.37" fill="#7fdc5c" stroke="#2f5020" stroke-width="0.9"/><rect x="1090.69" y="273.79" width="2" height="0.8" fill="#ffffff" opacity="0.85"/><rect x="1134.20" y="266.10" width="3.81" height="16.37" fill="#52d8a4" stroke="#1c4a3a" stroke-width="0.9"/><rect x="1154.77" y="266.10" width="3.81" height="16.37" fill="#7fdc5c" stroke="#2f5020" stroke-width="0.9"/><rect x="1171.23" y="266.10" width="3.81" height="16.37" fill="#c9dc4c" stroke="#4c5218" stroke-width="0.9"/><rect x="1183.57" y="266.10" width="3.81" height="16.37" fill="#52d66e" stroke="#1f4a26" stroke-width="0.9"/><rect x="1191.79" y="266.10" width="3.81" height="16.37" fill="#7fdc5c" stroke="#2f5020" stroke-width="0.9"/><rect x="1200.02" y="266.10" width="3.81" height="16.37" fill="#52d66e" stroke="#1f4a26" stroke-width="0.9"/><rect x="1208.25" y="266.10" width="3.81" height="16.37" fill="#52d66e" stroke="#1f4a26" stroke-width="0.9"/><rect x="1212.36" y="266.10" width="3.81" height="16.37" fill="#e3c654" stroke="#5a4a18" stroke-width="0.9"/><rect x="1220.59" y="266.10" width="5.87" height="16.37" fill="#7fdc5c" stroke="#2f5020" stroke-width="0.9"/><rect x="1222.33" y="273.79" width="2" height="0.8" fill="#ffffff" opacity="0.85"/><rect x="212.72" y="283.07" width="3.81" height="16.37" fill="#e3c654" stroke="#5a4a18" stroke-width="0.9"/><rect x="220.95" y="283.07" width="3.81" height="16.37" fill="#52d66e" stroke="#1f4a26" stroke-width="0.9"/><rect x="225.06" y="283.07" width="3.81" height="16.37" fill="#e3c654" stroke="#5a4a18" stroke-width="0.9"/><rect x="229.18" y="283.07" width="3.81" height="16.37" fill="#ee3230" stroke="#5a1010" stroke-width="0.9"/><rect x="233.29" y="283.07" width="3.81" height="16.37" fill="#52d66e" stroke="#1f4a26" stroke-width="0.9"/><rect x="344.36" y="283.07" width="3.81" height="16.37" fill="#e3c654" stroke="#5a4a18" stroke-width="0.9"/><rect x="352.59" y="283.07" width="3.81" height="16.37" fill="#52d66e" stroke="#1f4a26" stroke-width="0.9"/><rect x="356.70" y="283.07" width="3.81" height="16.37" fill="#e3c654" stroke="#5a4a18" stroke-width="0.9"/><rect x="360.82" y="283.07" width="3.81" height="16.37" fill="#ee3230" stroke="#5a1010" stroke-width="0.9"/><rect x="364.93" y="283.07" width="3.81" height="16.37" fill="#52d66e" stroke="#1f4a26" stroke-width="0.9"/><rect x="476.00" y="283.07" width="3.81" height="16.37" fill="#e3c654" stroke="#5a4a18" stroke-width="0.9"/><rect x="484.23" y="283.07" width="3.81" height="16.37" fill="#52d66e" stroke="#1f4a26" stroke-width="0.9"/><rect x="488.34" y="283.07" width="3.81" height="16.37" fill="#e3c654" stroke="#5a4a18" stroke-width="0.9"/><rect x="492.46" y="283.07" width="3.81" height="16.37" fill="#ee3230" stroke="#5a1010" stroke-width="0.9"/><rect x="496.57" y="283.07" width="3.81" height="16.37" fill="#52d66e" stroke="#1f4a26" stroke-width="0.9"/><rect x="607.64" y="283.07" width="3.81" height="16.37" fill="#e3c654" stroke="#5a4a18" stroke-width="0.9"/><rect x="615.87" y="283.07" width="3.81" height="16.37" fill="#52d8a4" stroke="#1c4a3a" stroke-width="0.9"/><rect x="619.98" y="283.07" width="3.81" height="16.37" fill="#e3c654" stroke="#5a4a18" stroke-width="0.9"/><rect x="624.10" y="283.07" width="3.81" height="16.37" fill="#52d66e" stroke="#1f4a26" stroke-width="0.9"/><rect x="628.21" y="283.07" width="5.87" height="16.37" fill="#7fdc5c" stroke="#2f5020" stroke-width="0.9"/><rect x="629.95" y="290.75" width="2" height="0.8" fill="#ffffff" opacity="0.85"/><rect x="854.47" y="283.07" width="3.81" height="16.37" fill="#e3c654" stroke="#5a4a18" stroke-width="0.9"/><rect x="862.69" y="283.07" width="3.81" height="16.37" fill="#52d66e" stroke="#1f4a26" stroke-width="0.9"/><rect x="1117.75" y="283.07" width="3.81" height="16.37" fill="#e3c654" stroke="#5a4a18" stroke-width="0.9"/><rect x="1125.97" y="283.07" width="3.81" height="16.37" fill="#52d66e" stroke="#1f4a26" stroke-width="0.9"/><rect x="710.49" y="300.04" width="3.81" height="16.37" fill="#52d66e" stroke="#1f4a26" stroke-width="0.9"/><rect x="722.83" y="300.04" width="3.81" height="16.37" fill="#7fdc5c" stroke="#2f5020" stroke-width="0.9"/><rect x="731.05" y="300.04" width="3.81" height="16.37" fill="#52d66e" stroke="#1f4a26" stroke-width="0.9"/><rect x="739.28" y="300.04" width="3.81" height="16.37" fill="#52d66e" stroke="#1f4a26" stroke-width="0.9"/><rect x="751.62" y="300.04" width="5.87" height="16.37" fill="#c9dc4c" stroke="#4c5218" stroke-width="0.9"/><rect x="753.36" y="307.73" width="2" height="0.8" fill="#ffffff" opacity="0.85"/><rect x="759.85" y="300.04" width="3.81" height="16.37" fill="#7fdc5c" stroke="#2f5020" stroke-width="0.9"/><rect x="973.77" y="300.04" width="3.81" height="16.37" fill="#52d66e" stroke="#1f4a26" stroke-width="0.9"/><rect x="986.11" y="300.04" width="3.81" height="16.37" fill="#7fdc5c" stroke="#2f5020" stroke-width="0.9"/><rect x="994.33" y="300.04" width="3.81" height="16.37" fill="#52d66e" stroke="#1f4a26" stroke-width="0.9"/><rect x="1002.56" y="300.04" width="3.81" height="16.37" fill="#7fdc5c" stroke="#2f5020" stroke-width="0.9"/><rect x="1014.90" y="300.04" width="5.87" height="16.37" fill="#c9dc4c" stroke="#4c5218" stroke-width="0.9"/><rect x="1016.64" y="307.73" width="2" height="0.8" fill="#ffffff" opacity="0.85"/><rect x="1023.13" y="300.04" width="3.81" height="16.37" fill="#52d66e" stroke="#1f4a26" stroke-width="0.9"/><rect x="1237.05" y="300.04" width="3.81" height="16.37" fill="#52d66e" stroke="#1f4a26" stroke-width="0.9"/><rect x="1249.39" y="300.04" width="3.81" height="16.37" fill="#52d66e" stroke="#1f4a26" stroke-width="0.9"/><rect x="1257.61" y="300.04" width="3.81" height="16.37" fill="#7fdc5c" stroke="#2f5020" stroke-width="0.9"/><rect x="1265.84" y="300.04" width="3.81" height="16.37" fill="#7fdc5c" stroke="#2f5020" stroke-width="0.9"/><rect x="196.27" y="333.98" width="3.81" height="16.37" fill="#52d66e" stroke="#1f4a26" stroke-width="0.9"/><rect x="204.49" y="333.98" width="3.81" height="16.37" fill="#7fdc5c" stroke="#2f5020" stroke-width="0.9"/><rect x="315.57" y="333.98" width="3.81" height="16.37" fill="#7fdc5c" stroke="#2f5020" stroke-width="0.9"/><rect x="319.68" y="333.98" width="3.81" height="16.37" fill="#52d66e" stroke="#1f4a26" stroke-width="0.9"/><rect x="327.91" y="333.98" width="3.81" height="16.37" fill="#7fdc5c" stroke="#2f5020" stroke-width="0.9"/><rect x="336.13" y="333.98" width="3.81" height="16.37" fill="#52d66e" stroke="#1f4a26" stroke-width="0.9"/><rect x="447.21" y="333.98" width="3.81" height="16.37" fill="#7fdc5c" stroke="#2f5020" stroke-width="0.9"/><rect x="451.32" y="333.98" width="3.81" height="16.37" fill="#52d66e" stroke="#1f4a26" stroke-width="0.9"/><rect x="459.55" y="333.98" width="3.81" height="16.37" fill="#7fdc5c" stroke="#2f5020" stroke-width="0.9"/><rect x="467.77" y="333.98" width="3.81" height="16.37" fill="#52d66e" stroke="#1f4a26" stroke-width="0.9"/><rect x="578.85" y="333.98" width="3.81" height="16.37" fill="#7fdc5c" stroke="#2f5020" stroke-width="0.9"/><rect x="582.96" y="333.98" width="3.81" height="16.37" fill="#52d66e" stroke="#1f4a26" stroke-width="0.9"/><rect x="591.19" y="333.98" width="3.81" height="16.37" fill="#7fdc5c" stroke="#2f5020" stroke-width="0.9"/><rect x="599.41" y="333.98" width="3.81" height="16.37" fill="#52d8a4" stroke="#1c4a3a" stroke-width="0.9"/><rect x="673.46" y="333.98" width="3.81" height="16.37" fill="#7fdc5c" stroke="#2f5020" stroke-width="0.9"/><rect x="681.69" y="333.98" width="3.81" height="16.37" fill="#52d8a4" stroke="#1c4a3a" stroke-width="0.9"/><rect x="685.80" y="333.98" width="3.81" height="16.37" fill="#e3c654" stroke="#5a4a18" stroke-width="0.9"/><rect x="689.92" y="333.98" width="3.81" height="16.37" fill="#52d66e" stroke="#1f4a26" stroke-width="0.9"/><rect x="694.03" y="333.98" width="5.87" height="16.37" fill="#7fdc5c" stroke="#2f5020" stroke-width="0.9"/><rect x="695.77" y="341.67" width="2" height="0.8" fill="#ffffff" opacity="0.85"/><rect x="776.31" y="333.98" width="3.81" height="16.37" fill="#dc6a4c" stroke="#5a2418" stroke-width="0.9"/><rect x="788.65" y="333.98" width="3.81" height="16.37" fill="#52d66e" stroke="#1f4a26" stroke-width="0.9"/><rect x="792.76" y="333.98" width="3.81" height="16.37" fill="#52d8a4" stroke="#1c4a3a" stroke-width="0.9"/><rect x="796.88" y="333.98" width="3.81" height="16.37" fill="#52d66e" stroke="#1f4a26" stroke-width="0.9"/><rect x="805.10" y="333.98" width="3.81" height="16.37" fill="#7fdc5c" stroke="#2f5020" stroke-width="0.9"/><rect x="813.33" y="333.98" width="3.81" height="16.37" fill="#52d8a4" stroke="#1c4a3a" stroke-width="0.9"/><rect x="817.44" y="333.98" width="3.81" height="16.37" fill="#c9dc4c" stroke="#4c5218" stroke-width="0.9"/><rect x="821.56" y="333.98" width="3.81" height="16.37" fill="#52d66e" stroke="#1f4a26" stroke-width="0.9"/><rect x="825.67" y="333.98" width="5.87" height="16.37" fill="#7fdc5c" stroke="#2f5020" stroke-width="0.9"/><rect x="827.41" y="341.67" width="2" height="0.8" fill="#ffffff" opacity="0.85"/><rect x="936.74" y="333.98" width="3.81" height="16.37" fill="#7fdc5c" stroke="#2f5020" stroke-width="0.9"/><rect x="944.97" y="333.98" width="3.81" height="16.37" fill="#52d8a4" stroke="#1c4a3a" stroke-width="0.9"/><rect x="949.08" y="333.98" width="3.81" height="16.37" fill="#c9dc4c" stroke="#4c5218" stroke-width="0.9"/><rect x="953.20" y="333.98" width="3.81" height="16.37" fill="#52d66e" stroke="#1f4a26" stroke-width="0.9"/><rect x="957.31" y="333.98" width="5.87" height="16.37" fill="#7fdc5c" stroke="#2f5020" stroke-width="0.9"/><rect x="959.05" y="341.67" width="2" height="0.8" fill="#ffffff" opacity="0.85"/><rect x="1039.59" y="333.98" width="3.81" height="16.37" fill="#dc6a4c" stroke="#5a2418" stroke-width="0.9"/><rect x="1051.93" y="333.98" width="3.81" height="16.37" fill="#52d66e" stroke="#1f4a26" stroke-width="0.9"/><rect x="1056.04" y="333.98" width="3.81" height="16.37" fill="#52d8a4" stroke="#1c4a3a" stroke-width="0.9"/><rect x="1060.15" y="333.98" width="3.81" height="16.37" fill="#52d66e" stroke="#1f4a26" stroke-width="0.9"/><rect x="1068.38" y="333.98" width="3.81" height="16.37" fill="#7fdc5c" stroke="#2f5020" stroke-width="0.9"/><rect x="1076.61" y="333.98" width="3.81" height="16.37" fill="#52d8a4" stroke="#1c4a3a" stroke-width="0.9"/><rect x="1080.72" y="333.98" width="3.81" height="16.37" fill="#c9dc4c" stroke="#4c5218" stroke-width="0.9"/><rect x="1084.84" y="333.98" width="3.81" height="16.37" fill="#52d66e" stroke="#1f4a26" stroke-width="0.9"/><rect x="1088.95" y="333.98" width="5.87" height="16.37" fill="#7fdc5c" stroke="#2f5020" stroke-width="0.9"/><rect x="1090.69" y="341.67" width="2" height="0.8" fill="#ffffff" opacity="0.85"/><rect x="1200.02" y="333.98" width="3.81" height="16.37" fill="#7fdc5c" stroke="#2f5020" stroke-width="0.9"/><rect x="1208.25" y="333.98" width="3.81" height="16.37" fill="#52d8a4" stroke="#1c4a3a" stroke-width="0.9"/><rect x="1212.36" y="333.98" width="3.81" height="16.37" fill="#c9dc4c" stroke="#4c5218" stroke-width="0.9"/><rect x="1216.48" y="333.98" width="3.81" height="16.37" fill="#52d66e" stroke="#1f4a26" stroke-width="0.9"/><rect x="1220.59" y="333.98" width="5.87" height="16.37" fill="#7fdc5c" stroke="#2f5020" stroke-width="0.9"/><rect x="1222.33" y="341.67" width="2" height="0.8" fill="#ffffff" opacity="0.85"/><rect x="212.72" y="350.95" width="3.81" height="16.37" fill="#52d8a4" stroke="#1c4a3a" stroke-width="0.9"/><rect x="216.84" y="350.95" width="3.81" height="16.37" fill="#c9dc4c" stroke="#4c5218" stroke-width="0.9"/><rect x="225.06" y="350.95" width="3.81" height="16.37" fill="#ee3230" stroke="#5a1010" stroke-width="0.9"/><rect x="233.29" y="350.95" width="3.81" height="16.37" fill="#52d66e" stroke="#1f4a26" stroke-width="0.9"/><rect x="249.75" y="350.95" width="3.81" height="16.37" fill="#c9dc4c" stroke="#4c5218" stroke-width="0.9"/><rect x="262.09" y="350.95" width="3.81" height="16.37" fill="#52d66e" stroke="#1f4a26" stroke-width="0.9"/><rect x="270.31" y="350.95" width="3.81" height="16.37" fill="#7fdc5c" stroke="#2f5020" stroke-width="0.9"/><rect x="278.54" y="350.95" width="3.81" height="16.37" fill="#7fdc5c" stroke="#2f5020" stroke-width="0.9"/><rect x="286.77" y="350.95" width="3.81" height="16.37" fill="#52d66e" stroke="#1f4a26" stroke-width="0.9"/><rect x="290.88" y="350.95" width="3.81" height="16.37" fill="#e3c654" stroke="#5a4a18" stroke-width="0.9"/><rect x="299.11" y="350.95" width="5.87" height="16.37" fill="#7fdc5c" stroke="#2f5020" stroke-width="0.9"/><rect x="300.85" y="358.63" width="2" height="0.8" fill="#ffffff" opacity="0.85"/><rect x="344.36" y="350.95" width="3.81" height="16.37" fill="#52d8a4" stroke="#1c4a3a" stroke-width="0.9"/><rect x="348.48" y="350.95" width="3.81" height="16.37" fill="#7fdc5c" stroke="#2f5020" stroke-width="0.9"/><rect x="356.70" y="350.95" width="3.81" height="16.37" fill="#ee3230" stroke="#5a1010" stroke-width="0.9"/><rect x="364.93" y="350.95" width="3.81" height="16.37" fill="#52d66e" stroke="#1f4a26" stroke-width="0.9"/><rect x="381.39" y="350.95" width="3.81" height="16.37" fill="#c9dc4c" stroke="#4c5218" stroke-width="0.9"/><rect x="393.73" y="350.95" width="3.81" height="16.37" fill="#7fdc5c" stroke="#2f5020" stroke-width="0.9"/><rect x="401.96" y="350.95" width="3.81" height="16.37" fill="#52d66e" stroke="#1f4a26" stroke-width="0.9"/><rect x="410.18" y="350.95" width="3.81" height="16.37" fill="#7fdc5c" stroke="#2f5020" stroke-width="0.9"/><rect x="418.41" y="350.95" width="3.81" height="16.37" fill="#52d66e" stroke="#1f4a26" stroke-width="0.9"/><rect x="422.52" y="350.95" width="3.81" height="16.37" fill="#e3c654" stroke="#5a4a18" stroke-width="0.9"/><rect x="430.75" y="350.95" width="5.87" height="16.37" fill="#7fdc5c" stroke="#2f5020" stroke-width="0.9"/><rect x="432.49" y="358.63" width="2" height="0.8" fill="#ffffff" opacity="0.85"/><rect x="476.00" y="350.95" width="3.81" height="16.37" fill="#52d8a4" stroke="#1c4a3a" stroke-width="0.9"/><rect x="480.12" y="350.95" width="3.81" height="16.37" fill="#c9dc4c" stroke="#4c5218" stroke-width="0.9"/><rect x="488.34" y="350.95" width="3.81" height="16.37" fill="#ee3230" stroke="#5a1010" stroke-width="0.9"/><rect x="496.57" y="350.95" width="3.81" height="16.37" fill="#52d66e" stroke="#1f4a26" stroke-width="0.9"/><rect x="513.03" y="350.95" width="3.81" height="16.37" fill="#c9dc4c" stroke="#4c5218" stroke-width="0.9"/><rect x="525.37" y="350.95" width="3.81" height="16.37" fill="#52d66e" stroke="#1f4a26" stroke-width="0.9"/><rect x="533.60" y="350.95" width="3.81" height="16.37" fill="#52d66e" stroke="#1f4a26" stroke-width="0.9"/><rect x="541.82" y="350.95" width="3.81" height="16.37" fill="#7fdc5c" stroke="#2f5020" stroke-width="0.9"/><rect x="550.05" y="350.95" width="3.81" height="16.37" fill="#52d66e" stroke="#1f4a26" stroke-width="0.9"/><rect x="554.16" y="350.95" width="3.81" height="16.37" fill="#e3c654" stroke="#5a4a18" stroke-width="0.9"/><rect x="562.39" y="350.95" width="5.87" height="16.37" fill="#7fdc5c" stroke="#2f5020" stroke-width="0.9"/><rect x="564.13" y="358.63" width="2" height="0.8" fill="#ffffff" opacity="0.85"/><rect x="607.64" y="350.95" width="3.81" height="16.37" fill="#52d8a4" stroke="#1c4a3a" stroke-width="0.9"/><rect x="611.76" y="350.95" width="3.81" height="16.37" fill="#e3c654" stroke="#5a4a18" stroke-width="0.9"/><rect x="619.98" y="350.95" width="5.05" height="16.37" fill="#e3c654" stroke="#5a4a18" stroke-width="0.9"/><rect x="621.31" y="358.63" width="2" height="0.8" fill="#ffffff" opacity="0.85"/><rect x="628.21" y="350.95" width="3.81" height="16.37" fill="#52d66e" stroke="#1f4a26" stroke-width="0.9"/><rect x="632.32" y="350.95" width="3.81" height="16.37" fill="#52d66e" stroke="#1f4a26" stroke-width="0.9"/><rect x="644.67" y="350.95" width="3.81" height="16.37" fill="#c9dc4c" stroke="#4c5218" stroke-width="0.9"/><rect x="657.01" y="350.95" width="3.81" height="16.37" fill="#52d66e" stroke="#1f4a26" stroke-width="0.9"/><rect x="665.24" y="350.95" width="3.81" height="16.37" fill="#7fdc5c" stroke="#2f5020" stroke-width="0.9"/><rect x="739.28" y="350.95" width="3.81" height="16.37" fill="#e3c654" stroke="#5a4a18" stroke-width="0.9"/><rect x="747.51" y="350.95" width="3.81" height="16.37" fill="#52d66e" stroke="#1f4a26" stroke-width="0.9"/><rect x="751.62" y="350.95" width="3.81" height="16.37" fill="#e3c654" stroke="#5a4a18" stroke-width="0.9"/><rect x="755.74" y="350.95" width="3.81" height="16.37" fill="#ee3230" stroke="#5a1010" stroke-width="0.9"/><rect x="759.85" y="350.95" width="3.81" height="16.37" fill="#52d66e" stroke="#1f4a26" stroke-width="0.9"/><rect x="838.01" y="350.95" width="3.81" height="16.37" fill="#52d8a4" stroke="#1c4a3a" stroke-width="0.9"/><rect x="842.13" y="350.95" width="3.81" height="16.37" fill="#ee3230" stroke="#5a1010" stroke-width="0.9"/><rect x="850.35" y="350.95" width="3.81" height="16.37" fill="#52d66e" stroke="#1f4a26" stroke-width="0.9"/><rect x="854.47" y="350.95" width="3.81" height="16.37" fill="#52d66e" stroke="#1f4a26" stroke-width="0.9"/><rect x="862.69" y="350.95" width="3.81" height="16.37" fill="#52d8a4" stroke="#1c4a3a" stroke-width="0.9"/><rect x="870.92" y="350.95" width="3.81" height="16.37" fill="#7fdc5c" stroke="#2f5020" stroke-width="0.9"/><rect x="883.26" y="350.95" width="5.05" height="16.37" fill="#c9dc4c" stroke="#4c5218" stroke-width="0.9"/><rect x="884.59" y="358.63" width="2" height="0.8" fill="#ffffff" opacity="0.85"/><rect x="891.49" y="350.95" width="3.81" height="16.37" fill="#52d66e" stroke="#1f4a26" stroke-width="0.9"/><rect x="907.95" y="350.95" width="3.81" height="16.37" fill="#c9dc4c" stroke="#4c5218" stroke-width="0.9"/><rect x="920.29" y="350.95" width="3.81" height="16.37" fill="#52d66e" stroke="#1f4a26" stroke-width="0.9"/><rect x="928.51" y="350.95" width="3.81" height="16.37" fill="#7fdc5c" stroke="#2f5020" stroke-width="0.9"/><rect x="1002.56" y="350.95" width="3.81" height="16.37" fill="#e3c654" stroke="#5a4a18" stroke-width="0.9"/><rect x="1010.79" y="350.95" width="3.81" height="16.37" fill="#52d66e" stroke="#1f4a26" stroke-width="0.9"/><rect x="1014.90" y="350.95" width="3.81" height="16.37" fill="#e3c654" stroke="#5a4a18" stroke-width="0.9"/><rect x="1019.02" y="350.95" width="3.81" height="16.37" fill="#ee3230" stroke="#5a1010" stroke-width="0.9"/><rect x="1023.13" y="350.95" width="3.81" height="16.37" fill="#52d66e" stroke="#1f4a26" stroke-width="0.9"/><rect x="1101.29" y="350.95" width="3.81" height="16.37" fill="#52d8a4" stroke="#1c4a3a" stroke-width="0.9"/><rect x="1105.41" y="350.95" width="3.81" height="16.37" fill="#ee3230" stroke="#5a1010" stroke-width="0.9"/><rect x="1113.63" y="350.95" width="3.81" height="16.37" fill="#52d66e" stroke="#1f4a26" stroke-width="0.9"/><rect x="1117.75" y="350.95" width="3.81" height="16.37" fill="#52d66e" stroke="#1f4a26" stroke-width="0.9"/><rect x="1125.97" y="350.95" width="3.81" height="16.37" fill="#52d8a4" stroke="#1c4a3a" stroke-width="0.9"/><rect x="1134.20" y="350.95" width="3.81" height="16.37" fill="#7fdc5c" stroke="#2f5020" stroke-width="0.9"/><rect x="1146.54" y="350.95" width="5.87" height="16.37" fill="#c9dc4c" stroke="#4c5218" stroke-width="0.9"/><rect x="1148.28" y="358.63" width="2" height="0.8" fill="#ffffff" opacity="0.85"/><rect x="1154.77" y="350.95" width="3.81" height="16.37" fill="#7fdc5c" stroke="#2f5020" stroke-width="0.9"/><rect x="1171.23" y="350.95" width="3.81" height="16.37" fill="#c9dc4c" stroke="#4c5218" stroke-width="0.9"/><rect x="1183.57" y="350.95" width="3.81" height="16.37" fill="#7fdc5c" stroke="#2f5020" stroke-width="0.9"/><rect x="1191.79" y="350.95" width="3.81" height="16.37" fill="#52d66e" stroke="#1f4a26" stroke-width="0.9"/><rect x="1265.84" y="350.95" width="3.81" height="16.37" fill="#e3c654" stroke="#5a4a18" stroke-width="0.9"/><rect x="1274.07" y="350.95" width="3.81" height="16.37" fill="#52d66e" stroke="#1f4a26" stroke-width="0.9"/><rect x="196.27" y="384.89" width="3.81" height="16.37" fill="#e3c654" stroke="#5a4a18" stroke-width="0.9"/><rect x="204.49" y="384.89" width="3.81" height="16.37" fill="#7fdc5c" stroke="#2f5020" stroke-width="0.9"/><rect x="327.91" y="384.89" width="3.81" height="16.37" fill="#e3c654" stroke="#5a4a18" stroke-width="0.9"/><rect x="336.13" y="384.89" width="3.81" height="16.37" fill="#52d66e" stroke="#1f4a26" stroke-width="0.9"/><rect x="459.55" y="384.89" width="3.81" height="16.37" fill="#e3c654" stroke="#5a4a18" stroke-width="0.9"/><rect x="467.77" y="384.89" width="3.81" height="16.37" fill="#52d66e" stroke="#1f4a26" stroke-width="0.9"/><rect x="591.19" y="384.89" width="3.81" height="16.37" fill="#e3c654" stroke="#5a4a18" stroke-width="0.9"/><rect x="599.41" y="384.89" width="3.81" height="16.37" fill="#7fdc5c" stroke="#2f5020" stroke-width="0.9"/><rect x="673.46" y="384.89" width="3.81" height="16.37" fill="#52d66e" stroke="#1f4a26" stroke-width="0.9"/><rect x="677.58" y="384.89" width="3.81" height="16.37" fill="#e3c654" stroke="#5a4a18" stroke-width="0.9"/><rect x="685.80" y="384.89" width="5.05" height="16.37" fill="#e3c654" stroke="#5a4a18" stroke-width="0.9"/><rect x="687.13" y="392.58" width="2" height="0.8" fill="#ffffff" opacity="0.85"/><rect x="694.03" y="384.89" width="3.81" height="16.37" fill="#52d66e" stroke="#1f4a26" stroke-width="0.9"/><rect x="698.14" y="384.89" width="3.81" height="16.37" fill="#52d66e" stroke="#1f4a26" stroke-width="0.9"/><rect x="710.49" y="384.89" width="3.81" height="16.37" fill="#52d66e" stroke="#1f4a26" stroke-width="0.9"/><rect x="714.60" y="384.89" width="3.81" height="16.37" fill="#7fdc5c" stroke="#2f5020" stroke-width="0.9"/><rect x="722.83" y="384.89" width="3.81" height="16.37" fill="#7fdc5c" stroke="#2f5020" stroke-width="0.9"/><rect x="731.05" y="384.89" width="3.81" height="16.37" fill="#52d66e" stroke="#1f4a26" stroke-width="0.9"/><rect x="805.10" y="384.89" width="3.81" height="16.37" fill="#52d66e" stroke="#1f4a26" stroke-width="0.9"/><rect x="809.22" y="384.89" width="3.81" height="16.37" fill="#e3c654" stroke="#5a4a18" stroke-width="0.9"/><rect x="817.44" y="384.89" width="5.87" height="16.37" fill="#e3c654" stroke="#5a4a18" stroke-width="0.9"/><rect x="819.18" y="392.58" width="2" height="0.8" fill="#ffffff" opacity="0.85"/><rect x="825.67" y="384.89" width="3.81" height="16.37" fill="#52d66e" stroke="#1f4a26" stroke-width="0.9"/><rect x="829.78" y="384.89" width="3.81" height="16.37" fill="#52d66e" stroke="#1f4a26" stroke-width="0.9"/><rect x="936.74" y="384.89" width="3.81" height="16.37" fill="#7fdc5c" stroke="#2f5020" stroke-width="0.9"/><rect x="940.86" y="384.89" width="3.81" height="16.37" fill="#c9dc4c" stroke="#4c5218" stroke-width="0.9"/><rect x="949.08" y="384.89" width="5.87" height="16.37" fill="#e3c654" stroke="#5a4a18" stroke-width="0.9"/><rect x="950.82" y="392.58" width="2" height="0.8" fill="#ffffff" opacity="0.85"/><rect x="957.31" y="384.89" width="3.81" height="16.37" fill="#52d66e" stroke="#1f4a26" stroke-width="0.9"/><rect x="961.42" y="384.89" width="3.81" height="16.37" fill="#52d66e" stroke="#1f4a26" stroke-width="0.9"/><rect x="973.77" y="384.89" width="3.81" height="16.37" fill="#7fdc5c" stroke="#2f5020" stroke-width="0.9"/><rect x="977.88" y="384.89" width="3.81" height="16.37" fill="#52d66e" stroke="#1f4a26" stroke-width="0.9"/><rect x="986.11" y="384.89" width="3.81" height="16.37" fill="#7fdc5c" stroke="#2f5020" stroke-width="0.9"/><rect x="994.33" y="384.89" width="3.81" height="16.37" fill="#7fdc5c" stroke="#2f5020" stroke-width="0.9"/><rect x="1068.38" y="384.89" width="3.81" height="16.37" fill="#7fdc5c" stroke="#2f5020" stroke-width="0.9"/><rect x="1072.50" y="384.89" width="3.81" height="16.37" fill="#e3c654" stroke="#5a4a18" stroke-width="0.9"/><rect x="1080.72" y="384.89" width="5.87" height="16.37" fill="#e3c654" stroke="#5a4a18" stroke-width="0.9"/><rect x="1082.46" y="392.58" width="2" height="0.8" fill="#ffffff" opacity="0.85"/><rect x="1088.95" y="384.89" width="3.81" height="16.37" fill="#52d66e" stroke="#1f4a26" stroke-width="0.9"/><rect x="1093.06" y="384.89" width="3.81" height="16.37" fill="#52d66e" stroke="#1f4a26" stroke-width="0.9"/><rect x="1200.02" y="384.89" width="3.81" height="16.37" fill="#7fdc5c" stroke="#2f5020" stroke-width="0.9"/><rect x="1204.14" y="384.89" width="3.81" height="16.37" fill="#e3c654" stroke="#5a4a18" stroke-width="0.9"/><rect x="1212.36" y="384.89" width="5.87" height="16.37" fill="#e3c654" stroke="#5a4a18" stroke-width="0.9"/><rect x="1214.10" y="392.58" width="2" height="0.8" fill="#ffffff" opacity="0.85"/><rect x="1220.59" y="384.89" width="3.81" height="16.37" fill="#52d8a4" stroke="#1c4a3a" stroke-width="0.9"/><rect x="1224.70" y="384.89" width="3.81" height="16.37" fill="#52d66e" stroke="#1f4a26" stroke-width="0.9"/><rect x="1237.05" y="384.89" width="3.81" height="16.37" fill="#7fdc5c" stroke="#2f5020" stroke-width="0.9"/><rect x="1241.16" y="384.89" width="3.81" height="16.37" fill="#52d66e" stroke="#1f4a26" stroke-width="0.9"/><rect x="1249.39" y="384.89" width="3.81" height="16.37" fill="#7fdc5c" stroke="#2f5020" stroke-width="0.9"/><rect x="1257.61" y="384.89" width="3.81" height="16.37" fill="#7fdc5c" stroke="#2f5020" stroke-width="0.9"/><rect x="249.75" y="418.83" width="3.81" height="16.37" fill="#7fdc5c" stroke="#2f5020" stroke-width="0.9"/><rect x="253.86" y="418.83" width="3.81" height="16.37" fill="#7fdc5c" stroke="#2f5020" stroke-width="0.9"/><rect x="262.09" y="418.83" width="3.81" height="16.37" fill="#52d66e" stroke="#1f4a26" stroke-width="0.9"/><rect x="270.31" y="418.83" width="3.81" height="16.37" fill="#7fdc5c" stroke="#2f5020" stroke-width="0.9"/><rect x="278.54" y="418.83" width="3.81" height="16.37" fill="#7fdc5c" stroke="#2f5020" stroke-width="0.9"/><rect x="286.77" y="418.83" width="3.81" height="16.37" fill="#52d8a4" stroke="#1c4a3a" stroke-width="0.9"/><rect x="290.88" y="418.83" width="3.81" height="16.37" fill="#e3c654" stroke="#5a4a18" stroke-width="0.9"/><rect x="295.00" y="418.83" width="3.81" height="16.37" fill="#52d66e" stroke="#1f4a26" stroke-width="0.9"/><rect x="299.11" y="418.83" width="5.87" height="16.37" fill="#7fdc5c" stroke="#2f5020" stroke-width="0.9"/><rect x="300.85" y="426.51" width="2" height="0.8" fill="#ffffff" opacity="0.85"/><rect x="381.39" y="418.83" width="3.81" height="16.37" fill="#52d66e" stroke="#1f4a26" stroke-width="0.9"/><rect x="385.50" y="418.83" width="3.81" height="16.37" fill="#7fdc5c" stroke="#2f5020" stroke-width="0.9"/><rect x="393.73" y="418.83" width="3.81" height="16.37" fill="#52d66e" stroke="#1f4a26" stroke-width="0.9"/><rect x="401.96" y="418.83" width="3.81" height="16.37" fill="#7fdc5c" stroke="#2f5020" stroke-width="0.9"/><rect x="410.18" y="418.83" width="3.81" height="16.37" fill="#7fdc5c" stroke="#2f5020" stroke-width="0.9"/><rect x="418.41" y="418.83" width="3.81" height="16.37" fill="#52d8a4" stroke="#1c4a3a" stroke-width="0.9"/><rect x="422.52" y="418.83" width="3.81" height="16.37" fill="#c9dc4c" stroke="#4c5218" stroke-width="0.9"/><rect x="426.64" y="418.83" width="3.81" height="16.37" fill="#52d66e" stroke="#1f4a26" stroke-width="0.9"/><rect x="430.75" y="418.83" width="5.87" height="16.37" fill="#7fdc5c" stroke="#2f5020" stroke-width="0.9"/><rect x="432.49" y="426.51" width="2" height="0.8" fill="#ffffff" opacity="0.85"/><rect x="513.03" y="418.83" width="3.81" height="16.37" fill="#7fdc5c" stroke="#2f5020" stroke-width="0.9"/><rect x="517.14" y="418.83" width="3.81" height="16.37" fill="#7fdc5c" stroke="#2f5020" stroke-width="0.9"/><rect x="525.37" y="418.83" width="3.81" height="16.37" fill="#52d66e" stroke="#1f4a26" stroke-width="0.9"/><rect x="533.60" y="418.83" width="3.81" height="16.37" fill="#52d66e" stroke="#1f4a26" stroke-width="0.9"/><rect x="541.82" y="418.83" width="3.81" height="16.37" fill="#7fdc5c" stroke="#2f5020" stroke-width="0.9"/><rect x="550.05" y="418.83" width="3.81" height="16.37" fill="#52d8a4" stroke="#1c4a3a" stroke-width="0.9"/><rect x="554.16" y="418.83" width="3.81" height="16.37" fill="#c9dc4c" stroke="#4c5218" stroke-width="0.9"/><rect x="558.28" y="418.83" width="3.81" height="16.37" fill="#52d66e" stroke="#1f4a26" stroke-width="0.9"/><rect x="562.39" y="418.83" width="5.87" height="16.37" fill="#7fdc5c" stroke="#2f5020" stroke-width="0.9"/><rect x="564.13" y="426.51" width="2" height="0.8" fill="#ffffff" opacity="0.85"/><rect x="644.67" y="418.83" width="3.81" height="16.37" fill="#7fdc5c" stroke="#2f5020" stroke-width="0.9"/><rect x="648.78" y="418.83" width="3.81" height="16.37" fill="#7fdc5c" stroke="#2f5020" stroke-width="0.9"/><rect x="657.01" y="418.83" width="3.81" height="16.37" fill="#52d66e" stroke="#1f4a26" stroke-width="0.9"/><rect x="665.24" y="418.83" width="3.81" height="16.37" fill="#7fdc5c" stroke="#2f5020" stroke-width="0.9"/><rect x="739.28" y="418.83" width="3.81" height="16.37" fill="#52d66e" stroke="#1f4a26" stroke-width="0.9"/><rect x="743.40" y="418.83" width="3.81" height="16.37" fill="#7fdc5c" stroke="#2f5020" stroke-width="0.9"/><rect x="751.62" y="418.83" width="3.81" height="16.37" fill="#ee3230" stroke="#5a1010" stroke-width="0.9"/><rect x="759.85" y="418.83" width="3.81" height="16.37" fill="#7fdc5c" stroke="#2f5020" stroke-width="0.9"/><rect x="776.31" y="418.83" width="3.81" height="16.37" fill="#c9dc4c" stroke="#4c5218" stroke-width="0.9"/><rect x="788.65" y="418.83" width="3.81" height="16.37" fill="#7fdc5c" stroke="#2f5020" stroke-width="0.9"/><rect x="796.88" y="418.83" width="3.81" height="16.37" fill="#52d66e" stroke="#1f4a26" stroke-width="0.9"/><rect x="870.92" y="418.83" width="3.81" height="16.37" fill="#e3c654" stroke="#5a4a18" stroke-width="0.9"/><rect x="879.15" y="418.83" width="3.81" height="16.37" fill="#52d66e" stroke="#1f4a26" stroke-width="0.9"/><rect x="883.26" y="418.83" width="3.81" height="16.37" fill="#e3c654" stroke="#5a4a18" stroke-width="0.9"/><rect x="887.38" y="418.83" width="3.81" height="16.37" fill="#ee3230" stroke="#5a1010" stroke-width="0.9"/><rect x="891.49" y="418.83" width="5.87" height="16.37" fill="#e2ae4c" stroke="#5a4218" stroke-width="0.9"/><rect x="893.23" y="426.51" width="2" height="0.8" fill="#ffffff" opacity="0.85"/><rect x="907.95" y="418.83" width="3.81" height="16.37" fill="#7fdc5c" stroke="#2f5020" stroke-width="0.9"/><rect x="912.06" y="418.83" width="3.81" height="16.37" fill="#7fdc5c" stroke="#2f5020" stroke-width="0.9"/><rect x="920.29" y="418.83" width="3.81" height="16.37" fill="#52d66e" stroke="#1f4a26" stroke-width="0.9"/><rect x="928.51" y="418.83" width="3.81" height="16.37" fill="#52d66e" stroke="#1f4a26" stroke-width="0.9"/><rect x="1002.56" y="418.83" width="3.81" height="16.37" fill="#52d66e" stroke="#1f4a26" stroke-width="0.9"/><rect x="1006.68" y="418.83" width="3.81" height="16.37" fill="#7fdc5c" stroke="#2f5020" stroke-width="0.9"/><rect x="1014.90" y="418.83" width="3.81" height="16.37" fill="#ee3230" stroke="#5a1010" stroke-width="0.9"/><rect x="1023.13" y="418.83" width="3.81" height="16.37" fill="#52d66e" stroke="#1f4a26" stroke-width="0.9"/><rect x="1039.59" y="418.83" width="3.81" height="16.37" fill="#c9dc4c" stroke="#4c5218" stroke-width="0.9"/><rect x="1051.93" y="418.83" width="3.81" height="16.37" fill="#7fdc5c" stroke="#2f5020" stroke-width="0.9"/><rect x="1060.15" y="418.83" width="3.81" height="16.37" fill="#52d66e" stroke="#1f4a26" stroke-width="0.9"/><rect x="1134.20" y="418.83" width="3.81" height="16.37" fill="#e3c654" stroke="#5a4a18" stroke-width="0.9"/><rect x="1142.43" y="418.83" width="3.81" height="16.37" fill="#52d66e" stroke="#1f4a26" stroke-width="0.9"/><rect x="1146.54" y="418.83" width="3.81" height="16.37" fill="#e3c654" stroke="#5a4a18" stroke-width="0.9"/><rect x="1150.66" y="418.83" width="3.81" height="16.37" fill="#ee3230" stroke="#5a1010" stroke-width="0.9"/><rect x="1154.77" y="418.83" width="5.87" height="16.37" fill="#e2ae4c" stroke="#5a4218" stroke-width="0.9"/><rect x="1156.51" y="426.51" width="2" height="0.8" fill="#ffffff" opacity="0.85"/><rect x="1171.23" y="418.83" width="3.81" height="16.37" fill="#7fdc5c" stroke="#2f5020" stroke-width="0.9"/><rect x="1175.34" y="418.83" width="3.81" height="16.37" fill="#7fdc5c" stroke="#2f5020" stroke-width="0.9"/><rect x="1183.57" y="418.83" width="3.81" height="16.37" fill="#7fdc5c" stroke="#2f5020" stroke-width="0.9"/><rect x="1191.79" y="418.83" width="3.81" height="16.37" fill="#52d66e" stroke="#1f4a26" stroke-width="0.9"/><rect x="1265.84" y="418.83" width="3.81" height="16.37" fill="#52d66e" stroke="#1f4a26" stroke-width="0.9"/><rect x="1269.96" y="418.83" width="3.81" height="16.37" fill="#7fdc5c" stroke="#2f5020" stroke-width="0.9"/><rect x="192.85" y="435.80" width="3.12" height="16.37" fill="#52d66e" stroke="#1f4a26" stroke-width="0.9"/><rect x="204.49" y="435.80" width="3.81" height="16.37" fill="#52d8a4" stroke="#1c4a3a" stroke-width="0.9"/><rect x="212.72" y="435.80" width="3.81" height="16.37" fill="#7fdc5c" stroke="#2f5020" stroke-width="0.9"/><rect x="225.06" y="435.80" width="5.05" height="16.37" fill="#c9dc4c" stroke="#4c5218" stroke-width="0.9"/><rect x="226.39" y="443.49" width="2" height="0.8" fill="#ffffff" opacity="0.85"/><rect x="233.29" y="435.80" width="3.81" height="16.37" fill="#52d66e" stroke="#1f4a26" stroke-width="0.9"/><rect x="311.45" y="435.80" width="3.81" height="16.37" fill="#52d8a4" stroke="#1c4a3a" stroke-width="0.9"/><rect x="315.57" y="435.80" width="3.81" height="16.37" fill="#ee3230" stroke="#5a1010" stroke-width="0.9"/><rect x="323.79" y="435.80" width="3.81" height="16.37" fill="#52d66e" stroke="#1f4a26" stroke-width="0.9"/><rect x="336.13" y="435.80" width="3.81" height="16.37" fill="#52d8a4" stroke="#1c4a3a" stroke-width="0.9"/><rect x="344.36" y="435.80" width="3.81" height="16.37" fill="#52d66e" stroke="#1f4a26" stroke-width="0.9"/><rect x="356.70" y="435.80" width="5.05" height="16.37" fill="#c9dc4c" stroke="#4c5218" stroke-width="0.9"/><rect x="358.03" y="443.49" width="2" height="0.8" fill="#ffffff" opacity="0.85"/><rect x="364.93" y="435.80" width="3.81" height="16.37" fill="#52d66e" stroke="#1f4a26" stroke-width="0.9"/><rect x="443.09" y="435.80" width="3.81" height="16.37" fill="#52d8a4" stroke="#1c4a3a" stroke-width="0.9"/><rect x="447.21" y="435.80" width="3.81" height="16.37" fill="#ee3230" stroke="#5a1010" stroke-width="0.9"/><rect x="455.43" y="435.80" width="3.81" height="16.37" fill="#52d66e" stroke="#1f4a26" stroke-width="0.9"/><rect x="467.77" y="435.80" width="3.81" height="16.37" fill="#52d8a4" stroke="#1c4a3a" stroke-width="0.9"/><rect x="476.00" y="435.80" width="3.81" height="16.37" fill="#7fdc5c" stroke="#2f5020" stroke-width="0.9"/><rect x="488.34" y="435.80" width="5.05" height="16.37" fill="#c9dc4c" stroke="#4c5218" stroke-width="0.9"/><rect x="489.67" y="443.49" width="2" height="0.8" fill="#ffffff" opacity="0.85"/><rect x="496.57" y="435.80" width="3.81" height="16.37" fill="#7fdc5c" stroke="#2f5020" stroke-width="0.9"/><rect x="574.73" y="435.80" width="3.81" height="16.37" fill="#52d66e" stroke="#1f4a26" stroke-width="0.9"/><rect x="578.85" y="435.80" width="3.81" height="16.37" fill="#ee3230" stroke="#5a1010" stroke-width="0.9"/><rect x="587.07" y="435.80" width="3.81" height="16.37" fill="#52d66e" stroke="#1f4a26" stroke-width="0.9"/><rect x="599.41" y="435.80" width="3.81" height="16.37" fill="#52d8a4" stroke="#1c4a3a" stroke-width="0.9"/><rect x="607.64" y="435.80" width="3.81" height="16.37" fill="#7fdc5c" stroke="#2f5020" stroke-width="0.9"/><rect x="615.87" y="435.80" width="3.81" height="16.37" fill="#52d66e" stroke="#1f4a26" stroke-width="0.9"/><rect x="619.98" y="435.80" width="3.81" height="16.37" fill="#e3c654" stroke="#5a4a18" stroke-width="0.9"/><rect x="628.21" y="435.80" width="5.87" height="16.37" fill="#7fdc5c" stroke="#2f5020" stroke-width="0.9"/><rect x="629.95" y="443.49" width="2" height="0.8" fill="#ffffff" opacity="0.85"/><rect x="722.83" y="435.80" width="3.81" height="16.37" fill="#e3c654" stroke="#5a4a18" stroke-width="0.9"/><rect x="731.05" y="435.80" width="3.81" height="16.37" fill="#52d66e" stroke="#1f4a26" stroke-width="0.9"/><rect x="842.13" y="435.80" width="3.81" height="16.37" fill="#7fdc5c" stroke="#2f5020" stroke-width="0.9"/><rect x="846.24" y="435.80" width="3.81" height="16.37" fill="#52d66e" stroke="#1f4a26" stroke-width="0.9"/><rect x="854.47" y="435.80" width="3.81" height="16.37" fill="#7fdc5c" stroke="#2f5020" stroke-width="0.9"/><rect x="862.69" y="435.80" width="3.81" height="16.37" fill="#52d66e" stroke="#1f4a26" stroke-width="0.9"/><rect x="986.11" y="435.80" width="3.81" height="16.37" fill="#e3c654" stroke="#5a4a18" stroke-width="0.9"/><rect x="994.33" y="435.80" width="3.81" height="16.37" fill="#52d66e" stroke="#1f4a26" stroke-width="0.9"/><rect x="1105.41" y="435.80" width="3.81" height="16.37" fill="#7fdc5c" stroke="#2f5020" stroke-width="0.9"/><rect x="1109.52" y="435.80" width="3.81" height="16.37" fill="#52d66e" stroke="#1f4a26" stroke-width="0.9"/><rect x="1117.75" y="435.80" width="3.81" height="16.37" fill="#7fdc5c" stroke="#2f5020" stroke-width="0.9"/><rect x="1125.97" y="435.80" width="3.81" height="16.37" fill="#52d66e" stroke="#1f4a26" stroke-width="0.9"/><rect x="1249.39" y="435.80" width="3.81" height="16.37" fill="#e3c654" stroke="#5a4a18" stroke-width="0.9"/><rect x="1257.61" y="435.80" width="3.81" height="16.37" fill="#52d66e" stroke="#1f4a26" stroke-width="0.9"/><rect x="249.75" y="469.74" width="3.81" height="16.37" fill="#dc6a4c" stroke="#5a2418" stroke-width="0.9"/><rect x="266.20" y="469.74" width="3.81" height="16.37" fill="#52d8a4" stroke="#1c4a3a" stroke-width="0.9"/><rect x="282.66" y="469.74" width="3.81" height="16.37" fill="#e3c654" stroke="#5a4a18" stroke-width="0.9"/><rect x="290.88" y="469.74" width="3.81" height="16.37" fill="#e3c654" stroke="#5a4a18" stroke-width="0.9"/><rect x="299.11" y="469.74" width="3.81" height="16.37" fill="#52d66e" stroke="#1f4a26" stroke-width="0.9"/><rect x="303.23" y="469.74" width="3.81" height="16.37" fill="#52d66e" stroke="#1f4a26" stroke-width="0.9"/><rect x="381.39" y="469.74" width="3.81" height="16.37" fill="#dc6a4c" stroke="#5a2418" stroke-width="0.9"/><rect x="397.84" y="469.74" width="3.81" height="16.37" fill="#52d8a4" stroke="#1c4a3a" stroke-width="0.9"/><rect x="414.30" y="469.74" width="3.81" height="16.37" fill="#e3c654" stroke="#5a4a18" stroke-width="0.9"/><rect x="422.52" y="469.74" width="3.81" height="16.37" fill="#e3c654" stroke="#5a4a18" stroke-width="0.9"/><rect x="430.75" y="469.74" width="3.81" height="16.37" fill="#52d66e" stroke="#1f4a26" stroke-width="0.9"/><rect x="434.87" y="469.74" width="3.81" height="16.37" fill="#52d66e" stroke="#1f4a26" stroke-width="0.9"/><rect x="513.03" y="469.74" width="3.81" height="16.37" fill="#dc6a4c" stroke="#5a2418" stroke-width="0.9"/><rect x="529.48" y="469.74" width="3.81" height="16.37" fill="#52d8a4" stroke="#1c4a3a" stroke-width="0.9"/><rect x="545.94" y="469.74" width="3.81" height="16.37" fill="#e3c654" stroke="#5a4a18" stroke-width="0.9"/><rect x="554.16" y="469.74" width="3.81" height="16.37" fill="#e3c654" stroke="#5a4a18" stroke-width="0.9"/><rect x="562.39" y="469.74" width="3.81" height="16.37" fill="#52d66e" stroke="#1f4a26" stroke-width="0.9"/><rect x="566.50" y="469.74" width="3.81" height="16.37" fill="#52d66e" stroke="#1f4a26" stroke-width="0.9"/><rect x="644.67" y="469.74" width="3.81" height="16.37" fill="#dc6a4c" stroke="#5a2418" stroke-width="0.9"/><rect x="661.12" y="469.74" width="3.81" height="16.37" fill="#52d8a4" stroke="#1c4a3a" stroke-width="0.9"/><rect x="875.04" y="469.74" width="3.81" height="16.37" fill="#c9dc4c" stroke="#4c5218" stroke-width="0.9"/><rect x="883.26" y="469.74" width="3.81" height="16.37" fill="#ee3230" stroke="#5a1010" stroke-width="0.9"/><rect x="907.95" y="469.74" width="3.81" height="16.37" fill="#dc6a4c" stroke="#5a2418" stroke-width="0.9"/><rect x="924.40" y="469.74" width="3.81" height="16.37" fill="#52d8a4" stroke="#1c4a3a" stroke-width="0.9"/><rect x="1138.32" y="469.74" width="3.81" height="16.37" fill="#c9dc4c" stroke="#4c5218" stroke-width="0.9"/><rect x="1146.54" y="469.74" width="3.81" height="16.37" fill="#ee3230" stroke="#5a1010" stroke-width="0.9"/><rect x="1171.23" y="469.74" width="3.81" height="16.37" fill="#dc6a4c" stroke="#5a2418" stroke-width="0.9"/><rect x="1187.68" y="469.74" width="3.81" height="16.37" fill="#52d8a4" stroke="#1c4a3a" stroke-width="0.9"/><rect x="706.37" y="503.68" width="3.81" height="16.37" fill="#52d8a4" stroke="#1c4a3a" stroke-width="0.9"/><rect x="710.49" y="503.68" width="3.81" height="16.37" fill="#ee3230" stroke="#5a1010" stroke-width="0.9"/><rect x="718.71" y="503.68" width="3.81" height="16.37" fill="#52d66e" stroke="#1f4a26" stroke-width="0.9"/><rect x="731.05" y="503.68" width="3.81" height="16.37" fill="#52d8a4" stroke="#1c4a3a" stroke-width="0.9"/><rect x="969.65" y="503.68" width="3.81" height="16.37" fill="#52d8a4" stroke="#1c4a3a" stroke-width="0.9"/><rect x="973.77" y="503.68" width="3.81" height="16.37" fill="#ee3230" stroke="#5a1010" stroke-width="0.9"/><rect x="981.99" y="503.68" width="3.81" height="16.37" fill="#52d66e" stroke="#1f4a26" stroke-width="0.9"/><rect x="994.33" y="503.68" width="3.81" height="16.37" fill="#52d8a4" stroke="#1c4a3a" stroke-width="0.9"/><rect x="1232.93" y="503.68" width="3.81" height="16.37" fill="#52d8a4" stroke="#1c4a3a" stroke-width="0.9"/><rect x="1237.05" y="503.68" width="3.81" height="16.37" fill="#ee3230" stroke="#5a1010" stroke-width="0.9"/><rect x="1245.27" y="503.68" width="3.81" height="16.37" fill="#52d66e" stroke="#1f4a26" stroke-width="0.9"/><rect x="1257.61" y="503.68" width="3.81" height="16.37" fill="#52d8a4" stroke="#1c4a3a" stroke-width="0.9"/><rect x="768.08" y="537.62" width="7.93" height="16.37" fill="#dc6a4c" stroke="#5a2418" stroke-width="0.9"/><rect x="770.84" y="545.31" width="2" height="0.8" fill="#ffffff" opacity="0.85"/><rect x="241.52" y="554.59" width="3.81" height="16.37" fill="#dc6a4c" stroke="#5a2418" stroke-width="0.9"/><rect x="373.16" y="554.59" width="3.81" height="16.37" fill="#dc6a4c" stroke="#5a2418" stroke-width="0.9"/><rect x="504.80" y="554.59" width="3.81" height="16.37" fill="#dc6a4c" stroke="#5a2418" stroke-width="0.9"/><rect x="615.87" y="554.59" width="7.93" height="16.37" fill="#52d66e" stroke="#1f4a26" stroke-width="0.9"/><rect x="618.63" y="562.27" width="2" height="0.8" fill="#ffffff" opacity="0.85"/><rect x="681.69" y="588.53" width="7.10" height="16.37" fill="#52d66e" stroke="#1f4a26" stroke-width="0.9"/><rect x="684.04" y="596.22" width="2" height="0.8" fill="#ffffff" opacity="0.85"/><rect x="813.33" y="588.53" width="7.10" height="16.37" fill="#52d66e" stroke="#1f4a26" stroke-width="0.9"/><rect x="815.68" y="596.22" width="2" height="0.8" fill="#ffffff" opacity="0.85"/><rect x="944.97" y="588.53" width="7.10" height="16.37" fill="#52d66e" stroke="#1f4a26" stroke-width="0.9"/><rect x="947.32" y="596.22" width="2" height="0.8" fill="#ffffff" opacity="0.85"/><rect x="1076.61" y="588.53" width="7.10" height="16.37" fill="#52d66e" stroke="#1f4a26" stroke-width="0.9"/><rect x="1078.96" y="596.22" width="2" height="0.8" fill="#ffffff" opacity="0.85"/><rect x="1208.25" y="588.53" width="7.10" height="16.37" fill="#52d66e" stroke="#1f4a26" stroke-width="0.9"/><rect x="1210.60" y="596.22" width="2" height="0.8" fill="#ffffff" opacity="0.85"/><rect x="1031.36" y="622.47" width="3.81" height="16.37" fill="#dc6a4c" stroke="#5a2418" stroke-width="0.9"/><rect x="286.77" y="673.38" width="7.10" height="16.37" fill="#52d66e" stroke="#1f4a26" stroke-width="0.9"/><rect x="289.12" y="681.07" width="2" height="0.8" fill="#ffffff" opacity="0.85"/><rect x="418.41" y="673.38" width="7.10" height="16.37" fill="#52d66e" stroke="#1f4a26" stroke-width="0.9"/><rect x="420.76" y="681.07" width="2" height="0.8" fill="#ffffff" opacity="0.85"/><rect x="550.05" y="673.38" width="7.10" height="16.37" fill="#52d66e" stroke="#1f4a26" stroke-width="0.9"/><rect x="552.40" y="681.07" width="2" height="0.8" fill="#ffffff" opacity="0.85"/><rect x="636.44" y="673.38" width="7.52" height="16.37" fill="#dc6a4c" stroke="#5a2418" stroke-width="0.9"/><rect x="639.00" y="681.07" width="2" height="0.8" fill="#ffffff" opacity="0.85"/><rect x="899.72" y="673.38" width="7.52" height="16.37" fill="#dc6a4c" stroke="#5a2418" stroke-width="0.9"/><rect x="902.28" y="681.07" width="2" height="0.8" fill="#ffffff" opacity="0.85"/><rect x="1163.00" y="673.38" width="7.52" height="16.37" fill="#dc6a4c" stroke="#5a2418" stroke-width="0.9"/><rect x="1165.56" y="681.07" width="2" height="0.8" fill="#ffffff" opacity="0.85"/><rect x="172.8" y="60.0" width="19.19999999999999" height="658.0" fill="#d9d9d9"/><rect x="172.8" y="85.81" width="19.19999999999999" height="1" fill="#6a6a6a"/><rect x="172.8" y="114.90" width="19.19999999999999" height="1" fill="#6a6a6a"/><rect x="172.8" y="143.99" width="19.19999999999999" height="1" fill="#6a6a6a"/><rect x="172.8" y="173.08" width="19.19999999999999" height="1" fill="#6a6a6a"/><rect x="172.8" y="202.17" width="19.19999999999999" height="1" fill="#6a6a6a"/><rect x="172.8" y="231.26" width="19.19999999999999" height="1" fill="#6a6a6a"/><rect x="172.8" y="260.35" width="19.19999999999999" height="1" fill="#6a6a6a"/><rect x="172.8" y="289.44" width="19.19999999999999" height="1" fill="#6a6a6a"/><rect x="172.8" y="318.54" width="19.19999999999999" height="1" fill="#6a6a6a"/><rect x="172.8" y="347.63" width="19.19999999999999" height="1" fill="#6a6a6a"/><rect x="172.8" y="376.72" width="19.19999999999999" height="1" fill="#6a6a6a"/><rect x="172.8" y="405.81" width="19.19999999999999" height="1" fill="#6a6a6a"/><rect x="172.8" y="434.90" width="19.19999999999999" height="1" fill="#6a6a6a"/><rect x="172.8" y="463.99" width="19.19999999999999" height="1" fill="#6a6a6a"/><rect x="172.8" y="493.08" width="19.19999999999999" height="1" fill="#6a6a6a"/><rect x="172.8" y="522.17" width="19.19999999999999" height="1" fill="#6a6a6a"/><rect x="172.8" y="551.26" width="19.19999999999999" height="1" fill="#6a6a6a"/><rect x="172.8" y="580.36" width="19.19999999999999" height="1" fill="#6a6a6a"/><rect x="172.8" y="609.45" width="19.19999999999999" height="1" fill="#6a6a6a"/><rect x="172.8" y="638.54" width="19.19999999999999" height="1" fill="#6a6a6a"/><rect x="172.8" y="667.63" width="19.19999999999999" height="1" fill="#6a6a6a"/><rect x="172.8" y="696.72" width="19.19999999999999" height="1" fill="#6a6a6a"/><rect x="172.8" y="689.95" width="9.1" height="16.97" fill="#1f1f1f"/><rect x="172.8" y="656.01" width="9.1" height="16.97" fill="#1f1f1f"/><rect x="172.8" y="605.10" width="9.1" height="16.97" fill="#1f1f1f"/><rect x="172.8" y="571.16" width="9.1" height="16.97" fill="#1f1f1f"/><rect x="172.8" y="520.25" width="9.1" height="16.97" fill="#1f1f1f"/><rect x="172.8" y="486.31" width="9.1" height="16.97" fill="#1f1f1f"/><rect x="172.8" y="452.37" width="9.1" height="16.97" fill="#1f1f1f"/><rect x="172.8" y="401.46" width="9.1" height="16.97" fill="#1f1f1f"/><rect x="172.8" y="367.52" width="9.1" height="16.97" fill="#1f1f1f"/><rect x="172.8" y="316.61" width="9.1" height="16.97" fill="#1f1f1f"/><rect x="172.8" y="282.67" width="9.1" height="16.97" fill="#1f1f1f"/><rect x="172.8" y="248.73" width="9.1" height="16.97" fill="#1f1f1f"/><rect x="172.8" y="197.82" width="9.1" height="16.97" fill="#1f1f1f"/><rect x="172.8" y="163.88" width="9.1" height="16.97" fill="#1f1f1f"/><rect x="172.8" y="112.97" width="9.1" height="16.97" fill="#1f1f1f"/><rect x="172.8" y="79.03" width="9.1" height="16.97" fill="#1f1f1f"/><rect x="172.8" y="60.00" width="9.1" height="2.06" fill="#1f1f1f"/><circle cx="176.9" cy="528.9" r="3" fill="#ffffff"/><rect x="191.5" y="60.0" width="1.2" height="658.0" fill="#5a5a5a"/><text x="190.2" y="229.9" font-family="'Liberation Sans', sans-serif" font-size="6" font-weight="bold" fill="#383838" text-anchor="end">C4</text><text x="190.2" y="433.5" font-family="'Liberation Sans', sans-serif" font-size="6" font-weight="bold" fill="#383838" text-anchor="end">C3</text><text x="190.2" y="637.1" font-family="'Liberation Sans', sans-serif" font-size="6" font-weight="bold" fill="#383838" text-anchor="end">C2</text><ellipse cx="270.4" cy="276" rx="102" ry="43.6" fill="none" stroke="#c8404a" stroke-width="1.2"/></svg>
<svg width="1280" height="720"><rect x="58.1" y="24.3" width="111.5" height="10.3" rx="2" fill="#2e2e2e"/><rect x="87.6" y="24.3" width="0.8" height="10.3" fill="#262626"/><rect x="136.4" y="24.3" width="0.8" height="10.3" fill="#262626"/><polyline points="81.2,29.349999999999998 82.9,31.05 84.60000000000001,29.349999999999998" fill="none" stroke="#bdbdbd" stroke-width="0.7"/><polyline points="129.0,29.349999999999998 130.7,31.05 132.39999999999998,29.349999999999998" fill="none" stroke="#bdbdbd" stroke-width="0.7"/><polyline points="162.3,29.349999999999998 164.0,31.05 165.7,29.349999999999998" fill="none" stroke="#bdbdbd" stroke-width="0.7"/><rect x="173.8" y="24.8" width="15.6" height="9.6" rx="2" fill="#2e2e2e"/><rect x="177.8" y="29.5" width="7.6" height="0.9" fill="#d8d8d8"/><polyline points="180.0,26.599999999999998 181.6,28.2 183.2,26.599999999999998" fill="none" stroke="#d8d8d8" stroke-width="0.8"/><polyline points="180.0,33.4 181.6,31.8 183.2,33.4" fill="none" stroke="#d8d8d8" stroke-width="0.8"/><rect x="194.4" y="24.8" width="15.6" height="9.6" rx="2" fill="#2e2e2e"/><line x1="197" y1="31" x2="199" y2="31" stroke="#d8d8d8" stroke-width="0.8"/><line x1="200" y1="32" x2="205.5" y2="28" stroke="#d8d8d8" stroke-width="0.8" stroke-dasharray="1 0.8"/><circle cx="200.8" cy="31.6" r="1" fill="#e8e8e8"/><circle cx="204.6" cy="28.6" r="1" fill="#e8e8e8"/><line x1="206" y1="27.8" x2="208" y2="27.8" stroke="#d8d8d8" stroke-width="0.8"/><rect x="214.4" y="24.8" width="31.8" height="9.6" rx="2" fill="#2e2e2e"/><path d="M231 24.8 H244.2 Q246.2 24.8 246.2 26.8 V32.4 Q246.2 34.4 244.2 34.4 H231 Z" fill="#2f8d3f"/><polyline points="218.2,28.6 219.6,29.8 218.2,31" fill="none" stroke="#e6e6e6" stroke-width="0.7"/><path d="M222.5 27.8 Q225 26.2 227.6 27.8 L227.6 31.8 Q225 33.2 222.5 31.8 Z" fill="#f0f0f0"/><path d="M234.2 27.8 Q236.7 26.2 239.3 27.8 L239.3 31.8 Q236.7 33.2 234.2 31.8 Z" fill="#f0f0f0"/><polyline points="241.8,28.6 243.2,29.8 241.8,31" fill="none" stroke="#e6e6e6" stroke-width="0.7"/><rect x="251.9" y="24.8" width="15.4" height="9.6" rx="2" fill="#2c6fb8"/><polyline points="254.6,28.8 255.8,29.9 254.6,31" fill="none" stroke="#e8e8e8" stroke-width="0.7"/><polyline points="264.8,28.8 263.6,29.9 264.8,31" fill="none" stroke="#e8e8e8" stroke-width="0.7"/><path d="M258 27 L259.6 29 L261.2 27" fill="none" stroke="#f0f0f0" stroke-width="0.9"/><rect x="259.2" y="28.8" width="0.9" height="4" fill="#f0f0f0"/><rect x="272.5" y="24.8" width="15.5" height="9.6" rx="2" fill="#ad8a1c"/><rect x="275.4" y="28.4" width="6" height="3.4" rx="1.7" transform="rotate(-25 278.4 30.1)" fill="none" stroke="#f2d24a" stroke-width="0.8"/><rect x="279.2" y="27.4" width="6" height="3.4" rx="1.7" transform="rotate(-25 282.2 29.1)" fill="none" stroke="#f2d24a" stroke-width="0.8"/><rect x="644.5" y="24" width="43.2" height="10.7" rx="2" fill="#2e2e2e"/><path d="M650.2 26.6 L650.2 32.4 L651.6 31.2 L652.6 33.4 L653.5 33 L652.6 30.9 L654.4 30.8 Z" fill="#f4f4f4"/><polyline points="659.6,29.3 661.0,30.7 662.4,29.3" fill="none" stroke="#bdbdbd" stroke-width="0.7"/><path d="M671.4 27.4 L672.6 26.4 L677.6 31.6 L676.4 32.8 Z" fill="none" stroke="#e8e8e8" stroke-width="0.9"/><rect x="671" y="26.8" width="1.8" height="1.4" fill="#e8e8e8" transform="rotate(45 672 27.5)"/><polyline points="681.6,29.3 683.0,30.7 684.4,29.3" fill="none" stroke="#bdbdbd" stroke-width="0.7"/><rect x="1001" y="24.3" width="63" height="10.3" rx="2" fill="#2b2b2b"/><rect x="1088.5" y="24.3" width="86" height="10.3" rx="2" fill="#2e2e2e"/><polyline points="1167.7,28.75 1169.2,27.25 1170.7,28.75" fill="none" stroke="#b0b0b0" stroke-width="0.7"/><polyline points="1167.7,30.450000000000003 1169.2,31.950000000000003 1170.7,30.450000000000003" fill="none" stroke="#b0b0b0" stroke-width="0.7"/><rect x="1178.6" y="24.3" width="15.9" height="10.3" rx="2" fill="#2e2e2e"/><rect x="1182.8" y="27" width="0.8" height="5.4" fill="#d0d0d0"/><rect x="1189.4" y="27" width="0.8" height="5.4" fill="#d0d0d0"/><line x1="1184" y1="29.7" x2="1189" y2="29.7" stroke="#d0d0d0" stroke-width="0.7"/><polyline points="1185.2,28.6 1184.1,29.7 1185.2,30.8" fill="none" stroke="#d0d0d0" stroke-width="0.7"/><polyline points="1187.8,28.6 1188.9,29.7 1187.8,30.8" fill="none" stroke="#d0d0d0" stroke-width="0.7"/><rect x="1199.2" y="24.3" width="74.8" height="10.3" rx="2" fill="#2e2e2e"/><rect x="1203.5" y="26.6" width="0.8" height="6" fill="#d0d0d0"/><polyline points="1202.8000000000002,27.85 1203.9,26.75 1205.0,27.85" fill="none" stroke="#d0d0d0" stroke-width="0.7"/><polyline points="1202.8000000000002,31.45 1203.9,32.55 1205.0,31.45" fill="none" stroke="#d0d0d0" stroke-width="0.7"/><rect x="1210.5" y="29.5" width="22" height="0.9" fill="#202020"/><path d="M1227.6 32 L1227.6 29 L1229.8 27 L1232 29 L1232 32 Z" fill="#c8c8c8"/><line x1="1238.4" y1="29.7" x2="1243.6" y2="29.7" stroke="#d0d0d0" stroke-width="0.8"/><polyline points="1239.6,28.6 1238.5,29.7 1239.6,30.8" fill="none" stroke="#d0d0d0" stroke-width="0.7"/><polyline points="1242.6,28.6 1243.7,29.7 1242.6,30.8" fill="none" stroke="#d0d0d0" stroke-width="0.7"/><rect x="1247" y="29.5" width="23" height="0.9" fill="#202020"/><path d="M1256 32 L1256 29 L1258.2 27 L1260.4 29 L1260.4 32 Z" fill="#c8c8c8"/><rect x="1212" y="26.4" width="0.5" height="0.5" fill="#777"/><rect x="1213.5" y="26.4" width="0.5" height="0.5" fill="#777"/><rect x="1216" y="26.4" width="0.5" height="0.5" fill="#777"/><rect x="1221" y="26.4" width="0.5" height="0.5" fill="#777"/><rect x="1226" y="26.4" width="0.5" height="0.5" fill="#777"/><rect x="1231" y="26.4" width="0.5" height="0.5" fill="#777"/><rect x="1248" y="26.4" width="0.5" height="0.5" fill="#777"/><rect x="1249.5" y="26.4" width="0.5" height="0.5" fill="#777"/><rect x="1251" y="26.4" width="0.5" height="0.5" fill="#777"/><rect x="1254" y="26.4" width="0.5" height="0.5" fill="#777"/><rect x="1259" y="26.4" width="0.5" height="0.5" fill="#777"/><rect x="1265" y="26.4" width="0.5" height="0.5" fill="#777"/><circle cx="59.5" cy="16.3" r="0.9" fill="#7a1414"/><rect x="171.3" y="42.2" width="16.4" height="10.4" rx="2" fill="#474747"/><rect x="176.4" y="44.6" width="6" height="5.6" rx="0.6" fill="none" stroke="#d0d0d0" stroke-width="0.7"/><rect x="176.4" y="44.6" width="6" height="1.1" fill="#d0d0d0"/><polyline points="178.4,47.3 179.4,48.3 180.4,47.3" fill="none" stroke="#d0d0d0" stroke-width="0.6"/><path d="M63.4 44.2 L67.2 40.8 L69.8 43 L69.2 47.2 L66.2 49.6 L63.2 48.2 Z" fill="#1c1616"/><line x1="58.6" y1="48.6" x2="66" y2="42" stroke="#d4d4d4" stroke-width="1.1"/><line x1="58.4" y1="49.9" x2="64.6" y2="44.6" stroke="#242424" stroke-width="1"/><line x1="59.6" y1="47.6" x2="65" y2="42.8" stroke="#2a2a2a" stroke-width="0.5" stroke-dasharray="0.6 0.9"/><rect x="60.2" y="49.6" width="1" height="3.4" fill="#1e1e1e"/><rect x="63.9" y="48.6" width="1" height="4.8" fill="#1e1e1e"/><rect x="66.4" y="48.2" width="0.9" height="3.8" fill="#1e1e1e"/></svg>
<div class="mt" style="left:27px;font-weight:bold">Logic Pro X</div>
<div class="mt" style="left:75.3px">File</div>
<div class="mt" style="left:95.7px">Edit</div>
<div class="mt" style="left:117.8px">Track</div>
<div class="mt" style="left:143.9px">Navigate</div>
<div class="mt" style="left:181.6px">Record</div>
<div class="mt" style="left:213.8px">Mix</div>
<div class="mt" style="left:233.5px">View</div>
<div class="mt" style="left:259.3px">Window</div>
<div class="mt" style="left:294.2px">1</div>
<div class="mt" style="left:306.6px">Help</div>
<div class="mt" style="left:1190px">Пн 16:39</div>
<div class="a" style="left:52px;top:11px;width:1226px;height:11px;text-align:center;font-size:6.9px;line-height:11px;color:#2a2a2a;padding-left:3px;box-sizing:border-box">Untitled - Piano Roll</div>
<div class="it" style="left:63.7px;top:26px;color:#e0e0e0;font-size:6.7px">Edit</div>
<div class="it" style="left:93.7px;top:26px;color:#e0e0e0;font-size:6.7px">Functions</div>
<div class="it" style="left:141.5px;top:26px;color:#e0e0e0;font-size:6.7px">View</div>
<div class="it" style="left:1014px;top:26px;color:#c8c8c8;font-size:6.8px;letter-spacing:0.2px">C#3</div><div class="it" style="left:1034px;top:26px;color:#c8c8c8;font-size:6.8px;letter-spacing:0.3px">5 3 2 1</div>
<div class="it" style="left:1069.5px;top:26px;color:#c8c8c8;font-size:6.8px">Snap:</div>
<div class="it" style="left:1094px;top:26px;color:#d8d8d8;font-size:6.8px">Smart</div>
<div class="it" style="left:52px;width:126px;top:40.8px;text-align:center;font-size:6.3px;font-weight:bold;color:#ececec">Brodyaga</div>
<div class="it" style="left:52px;width:138px;top:48px;text-align:center;font-size:5.75px;color:#c4c4c4">on Track Steinway Grand Piano</div>
<div class="it" style="left:61.4px;top:310.8px">Time Quantize (classic)</div>
<div class="a" style="left:61.4px;top:319.2px;width:106.3px;height:32.8px;background:#4f4f4f;border-radius:2px"></div>
<div class="a" style="left:61.4px;top:319.2px;width:106.3px;height:10.6px;background:#474747;border-radius:2px 2px 0 0"></div>
<div class="it" style="left:61.4px;width:91px;top:320.6px;text-align:center;color:#e4e4e4;font-weight:bold">1/16 Note</div>
<div class="it" style="left:156.5px;top:320.6px;color:#e4e4e4;font-weight:bold">Q</div>
<div class="it" style="left:63.8px;top:332.5px;color:#d0d0d0">Strength</div>
<div class="it" style="left:72.5px;top:341.6px;color:#d0d0d0">Swing</div>
<div class="a" style="left:94.6px;top:336px;width:54px;height:1px;background:#333"></div>
<div class="a" style="left:94.6px;top:345px;width:54px;height:1px;background:#333"></div>
<div class="a" style="left:143.6px;top:333.9px;width:5.2px;height:5.2px;border-radius:50%;background:#a9a9a9"></div>
<div class="a" style="left:95px;top:343px;width:5.2px;height:5.2px;border-radius:50%;background:#a9a9a9"></div>
<div class="it" style="left:153.7px;top:332.5px;color:#e0e0e0">100</div>
<div class="it" style="left:157.2px;top:341.6px;color:#e0e0e0">0</div>
<div class="it" style="left:60.8px;top:388.5px">Scale Quantize</div>
<div class="a" style="left:61.7px;top:397.5px;width:106px;height:10px;background:#474747;border-radius:2px"></div>
<div class="it" style="left:68.5px;top:398.5px;color:#e4e4e4;font-weight:bold">Off</div>
<div class="it" style="left:112.2px;top:398.5px;color:#e4e4e4;font-weight:bold">Major</div>
<div class="it" style="left:156.8px;top:398.5px;color:#e4e4e4;font-weight:bold">Q</div>
<div class="it" style="left:61px;top:443px">Velocity</div>
<div class="a" style="left:61.7px;top:451.2px;width:106px;height:12.3px;background:#4f4f4f;border-radius:2px"></div>
<div class="a" style="left:66.4px;top:457.6px;width:83.6px;height:1px;background:#333"></div>
<div class="a" style="left:115px;top:455.4px;width:5.4px;height:5.4px;border-radius:50%;background:#a9a9a9"></div>
<div class="it" style="left:154.5px;top:454px;color:#e0e0e0">80</div>
<svg width="1280" height="720"><polyline points="144.8,323.75 146.3,322.25 147.8,323.75" fill="none" stroke="#b0b0b0" stroke-width="0.7"/><polyline points="144.8,325.45000000000005 146.3,326.95000000000005 147.8,325.45000000000005" fill="none" stroke="#b0b0b0" stroke-width="0.7"/><rect x="152.4" y="319.2" width="0.8" height="10.6" fill="#3a3a3a"/><rect x="61.4" y="329.6" width="106.3" height="0.7" fill="#3c3c3c"/><rect x="92.3" y="397.5" width="0.8" height="10" fill="#3a3a3a"/><rect x="152.3" y="397.5" width="0.8" height="10" fill="#3a3a3a"/><polyline points="85.5,401.65 87.0,400.15 88.5,401.65" fill="none" stroke="#b0b0b0" stroke-width="0.7"/><polyline points="85.5,403.35 87.0,404.85 88.5,403.35" fill="none" stroke="#b0b0b0" stroke-width="0.7"/><polyline points="145.1,401.65 146.6,400.15 148.1,401.65" fill="none" stroke="#b0b0b0" stroke-width="0.7"/><polyline points="145.1,403.35 146.6,404.85 148.1,403.35" fill="none" stroke="#b0b0b0" stroke-width="0.7"/></svg>
<div class="it" style="left:484.6px;top:49.2px;font-size:5.5px;font-weight:bold;color:#2e7a3a">Brodyaga</div>
<div class="it" style="left:996.8px;top:49.2px;font-size:5.5px;font-weight:bold;color:#2e7a3a">Brodyaga</div>
<div class="a" style="left:52px;top:718.4px;width:1226px;height:1.6px;background:#8a8a8a"></div>
<div class="a" style="left:192.5px;top:718.4px;width:1085.5px;height:1.6px;background:#6c826c"></div>
<div class="a" style="left:52px;top:717.6px;width:140.5px;height:0.9px;background:#2a2a2a"></div>
<div class="a" style="left:192.5px;top:717.6px;width:1085.5px;height:0.9px;background:#283a2a"></div>
<div class="a" style="left:1278.2px;top:48.2px;width:1.8px;height:671.8px;background:#8e8e8e"></div>
</body></html>
